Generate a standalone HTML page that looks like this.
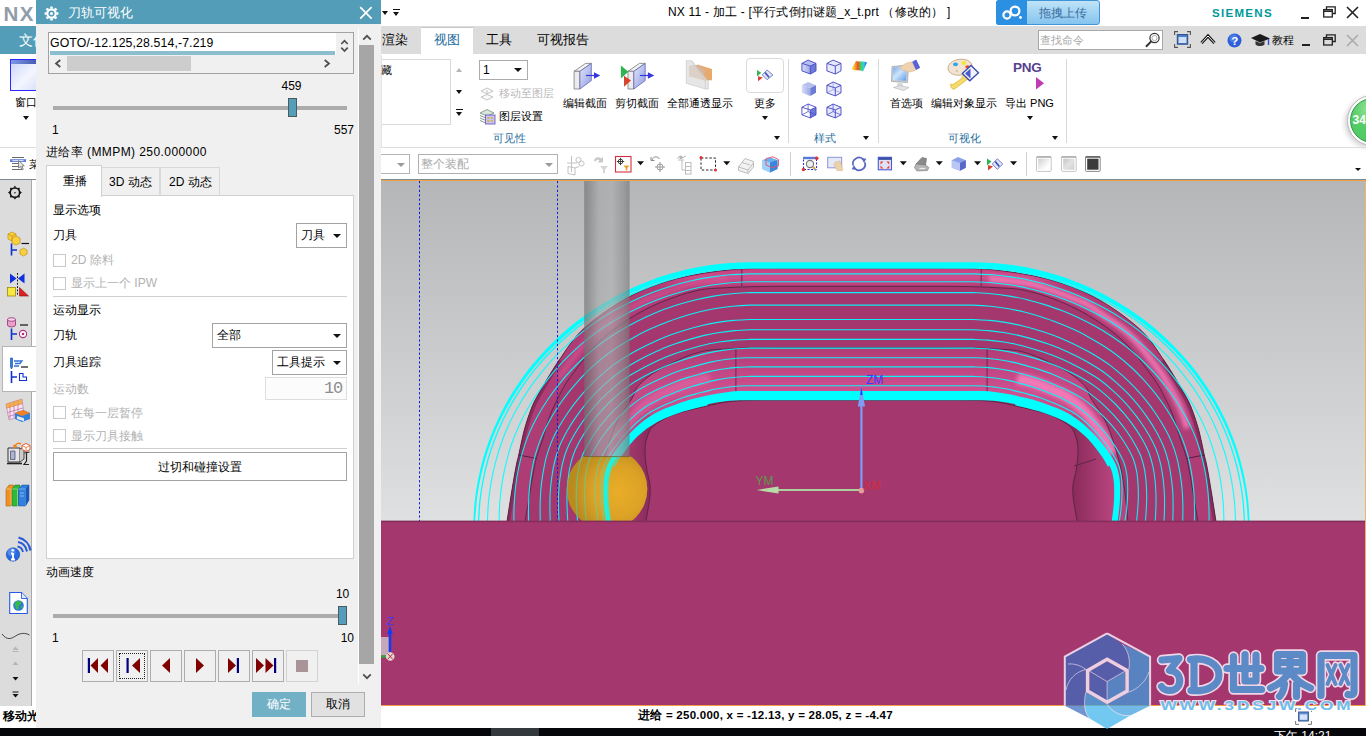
<!DOCTYPE html>
<html lang="zh"><head><meta charset="utf-8"><title>NX 11</title>
<style>
*{box-sizing:border-box;margin:0;padding:0}
html,body{width:1366px;height:736px;overflow:hidden;background:#fff}
body{position:relative;font-family:"Liberation Sans",sans-serif;font-size:12px;color:#000}
.a{position:absolute}
.t{position:absolute;white-space:nowrap;line-height:1}
svg{position:absolute;overflow:visible}
svg text{font-family:"Liberation Sans",sans-serif}
/* ---------- main window ---------- */
#tabrow{left:0;top:26px;width:1366px;height:28px;background:#dcdcdc}
#filetab{left:0;top:26px;width:60px;height:28px;background:#539db8}
#acttab{left:421px;top:27px;width:52px;height:28px;background:#fff;border-top:1px solid #c8c8c8}
#ribline{left:0;top:147px;width:1366px;height:1px;background:#dcdcdc}
#tbline{left:0;top:179px;width:1366px;height:1px;background:#7b8a93}
#orange{left:381px;top:180px;width:985px;height:1px;background:#f2a045}
#side{left:0;top:180px;width:32px;height:526px;background:#dcdcdc;border-right:1px solid #a9a9a9}
#side2{left:32px;top:180px;width:5px;height:526px;background:#fff}
#status{left:0;top:706px;width:1366px;height:22px;background:#fff}
#orange2{left:381px;top:705px;width:985px;height:1px;background:#f2a045}
#task{left:0;top:728px;width:1366px;height:8px;background:#04060a}
.rl{font-size:11px;color:#000}
.grp{font-size:11px;color:#1c6c9c}
.vsep{position:absolute;width:1px;background:#d8d8d8}
.tri{position:absolute;width:0;height:0;border-left:3.5px solid transparent;border-right:3.5px solid transparent;border-top:4px solid #111}
/* ---------- dialog ---------- */
#dlg{left:36px;top:0;width:345px;height:728px;background:#f0f0f0}
#dlgtitle{left:0;top:0;width:345px;height:24px;background:#539db8}
.lbl{font-size:12px;color:#000}
.dis{color:#b2b2b2}
.cb{position:absolute;width:13px;height:13px;border:1px solid #c9c9c9;background:#fff}
.dd{position:absolute;border:1px solid #a3a3a3;background:#fff}
.hsep{position:absolute;height:1px;background:#cfcfcf}
.pbtn{position:absolute;top:650px;width:32px;height:32px;border:1px solid #adadad;background:#f0f0f0}
</style></head><body>

<!-- ======= title bar ======= -->
<div class="t" style="left:3.4px;top:3.8px;font-size:20.5px;font-weight:bold;color:#8f9cab;letter-spacing:1.6px">NX</div>
<div class="tri" style="left:382px;top:11px"></div>
<div class="a" style="left:392.5px;top:8.5px;width:7px;height:1px;background:#111"></div><div class="tri" style="left:392.5px;top:11.5px"></div>
<div class="t" style="left:668px;top:6px;font-size:12px;letter-spacing:.2px">NX 11 - 加工 - [平行式倒扣谜题_x_t.prt （修改的） ]</div>
<div class="a" style="left:996px;top:0;width:104px;height:25px;border-radius:3px;background:linear-gradient(#bfe3f8,#86c4ee);border:1px solid #3f95d6"></div>
<div class="a" style="left:996px;top:0;width:31px;height:25px;border-radius:3px 0 0 3px;background:#2b8fe2"></div>
<svg style="left:1001px;top:4px" width="22" height="17" viewBox="0 0 22 17"><circle cx="6" cy="11" r="3.6" fill="none" stroke="#fff" stroke-width="2.2"/><circle cx="14" cy="7" r="4.4" fill="none" stroke="#fff" stroke-width="2.2"/><circle cx="19.5" cy="13.5" r="1.4" fill="#fff"/><path d="M8.5,8.5L11,9.5" stroke="#fff" stroke-width="2.2"/></svg>
<div class="t" style="left:1039px;top:6.5px;font-size:12px;color:#3c6c9e">拖拽上传</div>
<div class="t" style="left:1212px;top:8px;font-size:11.5px;font-weight:bold;color:#099;letter-spacing:1.3px">SIEMENS</div>
<div class="a" style="left:1301px;top:17px;width:8px;height:2px;background:#222"></div>
<svg style="left:1323px;top:6px" width="13" height="12" viewBox="0 0 13 12"><path d="M3.5,3.5V.8H12.2V7.5H9.5" fill="none" stroke="#222" stroke-width="1.3"/><rect x=".7" y="3.6" width="8.6" height="7.4" fill="#fff" stroke="#222" stroke-width="1.3"/><path d="M.7,5.2H9.3" stroke="#222" stroke-width="1.6"/></svg>
<svg style="left:1346px;top:6px" width="13" height="13" viewBox="0 0 13 13"><path d="M1,1L12,12M12,1L1,12" stroke="#222" stroke-width="1.6"/></svg>

<!-- ======= tab row ======= -->
<div id="tabrow" class="a"></div>
<div id="filetab" class="a"></div>
<div class="t" style="left:19px;top:33px;font-size:14px;color:#fff">文件</div>
<div id="acttab" class="a"></div>
<div class="t" style="left:382px;top:33px;font-size:13px">渲染</div>
<div class="t" style="left:434px;top:33px;font-size:13px;color:#1c6c9c">视图</div>
<div class="t" style="left:486px;top:33px;font-size:13px">工具</div>
<div class="t" style="left:537px;top:33px;font-size:13px">可视报告</div>
<div class="a" style="left:1038px;top:30px;width:125px;height:20px;background:#fff;border:1px solid #a8a8a8"></div>
<div class="t" style="left:1040px;top:34.5px;font-size:11px;color:#a9a9a9">查找命令</div>
<svg style="left:1144px;top:31px" width="18" height="18" viewBox="0 0 18 18"><circle cx="10.5" cy="7" r="4.6" fill="#fff" stroke="#333" stroke-width="1.2"/><circle cx="10.5" cy="7" r="2.6" fill="none" stroke="#999" stroke-width=".8"/><path d="M7.2,10.4L2,15.8" stroke="#333" stroke-width="2"/></svg>
<svg style="left:1174px;top:31px" width="17" height="17" viewBox="0 0 17 17"><path d="M.6,4V.6H4M13,.6h3.4V4M16.4,13v3.4H13M4,16.4H.6V13" fill="none" stroke="#555" stroke-width="1.1"/><rect x="3.3" y="3.6" width="10.4" height="9.6" fill="#4a7fd0" stroke="#2a4a80" stroke-width="1"/><rect x="4.6" y="6" width="7.8" height="6" fill="#cfe0f6"/></svg>
<svg style="left:1200px;top:33px" width="16" height="12" viewBox="0 0 16 12"><path d="M1.5,10L8,3L14.5,10" fill="none" stroke="#111" stroke-width="3"/><path d="M1.5,10L8,3L14.5,10" fill="none" stroke="#fff" stroke-width="1"/></svg>
<svg style="left:1227px;top:33px" width="15" height="15" viewBox="0 0 15 15"><circle cx="7.5" cy="7.5" r="7" fill="#2f5fd8"/><circle cx="6.5" cy="5.5" r="4" fill="#5f8df0" opacity=".6"/><text x="4.2" y="12" font-size="11.5" font-weight="bold" fill="#fff">?</text></svg>
<svg style="left:1251px;top:34px" width="20" height="13" viewBox="0 0 20 13"><path d="M0,4L9,0L19,4.5L9,8.5Z" fill="#1a1a1a"/><path d="M4.5,7V10.5C7,12.5 11,12.5 13.5,10.5V7L9,9Z" fill="#333"/><path d="M17.5,5V11" stroke="#2a4fd0" stroke-width="1.4"/></svg>
<div class="t" style="left:1272px;top:34.5px;font-size:11px">教程</div>
<div class="a" style="left:1302px;top:44px;width:8px;height:2px;background:#222"></div>
<svg style="left:1323px;top:34px" width="13" height="12" viewBox="0 0 13 12"><path d="M3.5,3.5V.8H12.2V7.5H9.5" fill="none" stroke="#222" stroke-width="1.3"/><rect x=".7" y="3.6" width="8.6" height="7.4" fill="#dcdcdc" stroke="#222" stroke-width="1.3"/><path d="M.7,5.2H9.3" stroke="#222" stroke-width="1.6"/></svg>
<svg style="left:1346px;top:34px" width="13" height="13" viewBox="0 0 13 13"><path d="M1,1L12,12M12,1L1,12" stroke="#a9a9a9" stroke-width="1.5"/></svg>

<!-- ======= ribbon ======= -->
<!-- left (window) -->
<div class="a" style="left:10px;top:59px;width:32px;height:32px;border:1px solid #2a2aff;background:linear-gradient(135deg,#c9d3f8 0%,#f4f6ff 55%,#d5dcf8 100%)"></div>
<div class="a" style="left:11px;top:60px;width:30px;height:4px;background:linear-gradient(90deg,#7f97e6,#3a4fa8)"></div>
<div class="t rl" style="left:15px;top:97px">窗口</div><div class="tri" style="left:22.5px;top:115.5px"></div>
<div class="a" style="left:0;top:147px;width:36px;height:1px;background:#dcdcdc"></div>
<svg style="left:9px;top:156px" width="18" height="16" viewBox="0 0 18 16"><rect x="1" y="3.2" width="16" height="2.8" fill="#5f7fe0"/><path d="M3,1.5H15M3,7.5H10M3,10.5H10M3,13.5H13" stroke="#6a6a6a" stroke-width="1"/><path d="M3.5,4.6H14.5" stroke="#dfe6fb" stroke-width="1"/><path d="M9.5,4.5V12L11.5,10.5L13,13.8L14.3,13.2L12.8,10L15.3,9.8Z" fill="#e8e8e8" stroke="#6a6a6a" stroke-width=".8"/></svg>
<div class="t" style="left:29px;top:159px;font-size:11px">菜</div>

<!-- gallery -->
<div class="a" style="left:380px;top:59px;width:71px;height:66px;border:1px solid #d9d9d9;background:#fff"></div>
<div class="a" style="left:381px;top:55px;width:1px;height:92px;background:#e4e4e4"></div>
<div class="t rl" style="left:381px;top:65px">藏</div>
<div class="tri" style="left:456px;top:68px;border-top:none;border-bottom:4px solid #b5b5b5"></div>
<div class="tri" style="left:456px;top:90px"></div>
<div class="a" style="left:456px;top:109px;width:7px;height:1px;background:#111"></div><div class="tri" style="left:456px;top:112px"></div>
<!-- layer controls -->
<div class="dd" style="left:479px;top:60px;width:49px;height:20px;border-color:#ababab"></div>
<div class="t" style="left:483px;top:64px;font-size:12px">1</div><div class="tri" style="left:514px;top:68px;border-left-width:4px;border-right-width:4px;border-top-width:4.5px"></div>
<svg style="left:479px;top:86px" width="16" height="16" viewBox="0 0 16 16"><path d="M2,5L8,2L14,5L8,8ZM2,11L8,8.5L14,11L8,14Z" fill="#fafafa" stroke="#c4c4c4" stroke-width="1"/><path d="M8,8V4" stroke="#c4c4c4"/></svg>
<div class="t rl" style="left:499px;top:88px;color:#b9b9b9">移动至图层</div>
<svg style="left:479px;top:108px" width="17" height="17" viewBox="0 0 17 17"><path d="M1,5L8,1.5L15,5L8,8Z" fill="#d7e6d8" stroke="#7a8a80" stroke-width=".8"/><path d="M1,7.5L8,10.5M1,10L8,13M1,12.5L8,15.5" stroke="#7a8a80" stroke-width=".9" fill="none"/><rect x="6.5" y="7" width="9.5" height="9" fill="#c9c4f0" stroke="#6a60c0" stroke-width=".9"/><path d="M8.5,10h2M12,10h2M8.5,13h2M12,13h2" stroke="#d8b020" stroke-width="1.4"/></svg>
<div class="t rl" style="left:499px;top:111px">图层设置</div>
<div class="t grp" style="left:492.5px;top:132.5px">可见性</div>

<!-- edit section -->
<svg style="left:572px;top:60px" width="32" height="32" viewBox="572 60 32 32"><defs><linearGradient id="slab" x1="0" y1="0" x2="1" y2="1"><stop offset="0" stop-color="#e4e8fa"/><stop offset="1" stop-color="#8f9ce2"/></linearGradient></defs>
<g id="slabg"><path d="M574.1,71.3L585.6,63.4H591.3L579.9,71.3Z" fill="#f4f4f4" stroke="#7a7a7a" stroke-width=".8"/><path d="M574.1,71.3H579.9V89H574.1Z" fill="#ececec" stroke="#7a7a7a" stroke-width=".8"/><path d="M579.9,71.3L591.3,63.4V80.6L579.9,89Z" fill="url(#slab)" stroke="#6464b4" stroke-width=".8"/><path d="M586,75.5H594.5" stroke="#3636e0" stroke-width="1.2"/><path d="M594,72.2L600.3,75.5L594,78.8Z" fill="#3636e0"/></g></svg>
<div class="t rl" style="left:563px;top:97.5px">编辑截面</div>
<!-- clip section -->
<svg style="left:618px;top:60px" width="40" height="32" viewBox="618 60 40 32"><use href="#slabg" x="53.9"/><path d="M620.9,65.6L628.4,71.8L620.9,78.4Z" fill="#2fb452"/><path d="M624,75.7L631,80.6L624,86.8Z" fill="#d7432c"/></svg>
<div class="t rl" style="left:615px;top:97.5px">剪切截面</div>
<!-- see-thru all -->
<svg style="left:684px;top:58px" width="32" height="34" viewBox="684 58 32 34"><path d="M689,66L698.3,64.7L712,69.1V80.2L704.9,80.6L689,76.2Z" fill="#e6aa6c"/><path d="M689,66L698.3,64.7L704.9,69.5V80.6L689,76.2Z" fill="#d9b394"/><path d="M686.3,60.7H691.6L708.4,81.5V89H705.3L686.3,83.3Z" fill="#dcdcdc" fill-opacity=".72" stroke="#c4c4c4" stroke-width=".6"/><path d="M691.6,60.7L705.3,81.5V89" fill="none" stroke="#c8c8c8" stroke-width=".7"/></svg>
<div class="t rl" style="left:667px;top:97.5px">全部通透显示</div>
<!-- more -->
<div class="a" style="left:746px;top:58px;width:38px;height:35px;border:1px solid #dadada;border-radius:4px;background:#fff"></div>
<svg style="left:755px;top:68px" width="20" height="14" viewBox="755 68 20 14"><path d="M757,70L761.2,72.8L757,76.6Z" fill="#2fb452"/><path d="M758,76.2L762.8,77.6L758,81.2Z" fill="#d7432c"/><path d="M762.3,74.9L767.1,70L772.9,74.9L767.1,79.7Z" fill="#dfe5f8" stroke="#6a78c0" stroke-width=".9"/><path d="M765,72.5L769,77.3" stroke="#3a4ab0" stroke-width="1.5"/></svg>
<div class="t rl" style="left:754px;top:97.5px">更多</div><div class="tri" style="left:762px;top:116px"></div>
<div class="tri" style="left:773.5px;top:135.5px"></div>
<div class="vsep" style="left:788px;top:59px;height:84px"></div>

<!-- style cubes -->
<svg style="left:800px;top:58px" width="70" height="62" viewBox="800 58 70 62"><defs><linearGradient id="cf" x1="0" y1="0" x2="1" y2="0"><stop offset="0" stop-color="#d5dcf7"/><stop offset="1" stop-color="#9aa8e6"/></linearGradient>
<g id="cubeS"><path d="M0,3.3L6.2,0L14.1,3.3L8.4,5.9Z" fill="#b4bfee"/><path d="M0,3.3L8.4,5.9V13.9L0,10.8Z" fill="url(#cf)"/><path d="M8.4,5.9L14.1,3.3V10.8L8.4,13.9Z" fill="#6b7cd2"/></g>
<g id="cubeW" fill="none" stroke="#4444c8" stroke-width=".9"><path d="M0,3.3L6.2,0L14.1,3.3V10.8L8.4,13.9L0,10.8ZM0,3.3L8.4,5.9L14.1,3.3M8.4,5.9V13.9"/></g>
<g id="cubeH" fill="none" stroke="#4444c8" stroke-width=".7"><path d="M6.2,0V7.6L0,10.8M6.2,7.6L14.1,10.8"/></g></defs>
<use href="#cubeS" x="801.9" y="60.1"/><use href="#cubeW" x="801.9" y="60.1"/>
<g transform="translate(826.9,60.1)"><path d="M0,3.3L6.2,0L14.1,3.3V10.8L8.4,13.9L0,10.8Z" fill="#e6eafa"/></g><use href="#cubeW" x="826.9" y="60.1"/>
<use href="#cubeS" x="801.9" y="82"/>
<g transform="translate(826.9,82)"><path d="M0,3.3L6.2,0L14.1,3.3V10.8L8.4,13.9L0,10.8Z" fill="#e6eafa"/></g><use href="#cubeW" x="826.9" y="82"/><g opacity=".5"><use href="#cubeH" x="826.9" y="82"/></g>
<g transform="translate(801.9,104)"><path d="M8.4,5.9L14.1,3.3V10.8L8.4,13.9Z" fill="#6b7cd2"/></g><use href="#cubeW" x="801.9" y="104"/><use href="#cubeH" x="801.9" y="104"/>
<g transform="translate(826.9,104)"><path d="M0,3.3L6.2,0L14.1,3.3V10.8L8.4,13.9L0,10.8Z" fill="#e6eafa"/></g><use href="#cubeW" x="826.9" y="104"/><use href="#cubeH" x="826.9" y="104"/>
<defs><linearGradient id="rb" x1="852" y1="0" x2="867" y2="0" gradientUnits="userSpaceOnUse"><stop offset="0" stop-color="#f6ea3a"/><stop offset=".22" stop-color="#f6a02a"/><stop offset=".4" stop-color="#ee4a2a"/><stop offset=".58" stop-color="#4ad04a"/><stop offset=".78" stop-color="#2ad0e8"/><stop offset="1" stop-color="#3a50e8"/></linearGradient></defs>
<path d="M851.6,69L856,60.8C859,62.6 862.5,60.4 867,62.6L863,71.6C859,69 856,71.6 851.6,69Z" fill="url(#rb)"/></svg>
<div class="t grp" style="left:813.5px;top:132.5px">样式</div><div class="tri" style="left:863px;top:135.5px"></div>
<div class="vsep" style="left:877.5px;top:59px;height:84px"></div>

<!-- preferences -->
<svg style="left:888px;top:58px" width="36" height="34" viewBox="888 58 36 34"><defs><linearGradient id="scr" x1="0" y1="0" x2="1" y2="1"><stop offset="0" stop-color="#6aa8ee"/><stop offset=".45" stop-color="#cfe4fa"/><stop offset="1" stop-color="#5a9ae6"/></linearGradient></defs>
<path d="M892,66.5L908.5,65L907.5,82.5L891.5,81.5Z" fill="#c8ccd0" stroke="#9aa0a6" stroke-width=".7"/><path d="M893.2,67.8L906.8,66.6L906,80.8L892.8,80Z" fill="url(#scr)"/><path d="M897.5,82H902.5L903,87H897Z" fill="#d8dadc"/><path d="M893.5,87.5L899,85.5L909,87.5L903.5,90.5Z" fill="#e2e4e6" stroke="#aeb2b6" stroke-width=".6"/>
<path d="M900,68.5C902,65 906,62.5 912,62L916,70C911,72.5 907,72.5 905.5,70.5C903.5,70.5 901,70 900,68.5Z" fill="#efd2b0" stroke="#d4b088" stroke-width=".5"/><path d="M912.2,61.8L916.2,59.5L920.2,67.8L916,70Z" fill="#5a62d8"/></svg>
<div class="t rl" style="left:890px;top:97.5px">首选项</div>
<!-- edit object display -->
<svg style="left:944px;top:57px" width="38" height="36" viewBox="944 57 38 36"><ellipse cx="960" cy="67.2" rx="12.2" ry="8" fill="#f2e4d4" stroke="#c8a078" stroke-width=".8" transform="rotate(-8 960 67)"/><ellipse cx="955.5" cy="64.3" rx="2.5" ry="1.9" fill="#2ea4ea"/><ellipse cx="963.8" cy="63" rx="2.2" ry="2" fill="#f4e82a"/><ellipse cx="967.5" cy="66.8" rx="2.2" ry="1.6" fill="#e84a2a"/><circle cx="956.8" cy="71" r="1.2" fill="#d8c4a8"/>
<path d="M950.5,86.5L953,89.5L956,88L968.5,78.5C971,79 973,77 972,74L968.5,72.5L965,74.5C962,75 962.5,78 961,79L953,84.5L950.8,84Z" fill="#f5dc6a" stroke="#d8b030" stroke-width=".7"/>
<path d="M962.3,73.5L971,65.5L978.5,72.8L969.8,80.8Z" fill="#f2f4fc" stroke="#3a4aa8" stroke-width="1.3"/><path d="M965,73.5L970.5,68.5V78.5Z" fill="#4a5ad0"/></svg>
<div class="t rl" style="left:931px;top:97.5px">编辑对象显示</div>
<!-- export png -->
<div class="t" style="left:1013px;top:60.5px;font-size:13.5px;font-weight:bold;color:#573f8f;letter-spacing:-.3px">PNG</div>
<svg style="left:1035px;top:76px" width="10" height="14" viewBox="0 0 10 14"><path d="M1,1L9,7.2L1,13.4Z" fill="#c13cb4"/></svg>
<div class="t rl" style="left:1005px;top:97.5px">导出 PNG</div><div class="tri" style="left:1026.5px;top:116px"></div>
<div class="t grp" style="left:947.5px;top:132.5px">可视化</div><div class="tri" style="left:1051.5px;top:135.5px"></div>
<div class="vsep" style="left:1066px;top:59px;height:84px"></div>
<!-- green badge -->
<div class="a" style="left:1346.5px;top:94.5px;width:51px;height:51px;border-radius:50%;background:#fff;border:1.5px solid #b9b9b9;box-shadow:-2px 2px 5px rgba(0,0,0,.18)"></div>
<div class="a" style="left:1349.5px;top:97.5px;width:45px;height:45px;border-radius:50%;background:radial-gradient(circle at 45% 25%,#9be6a0 0%,#55cc66 45%,#4cc862 100%);border:1px solid #2f9a48"></div>
<div class="t" style="left:1352.5px;top:114px;font-size:12px;font-weight:bold;color:#fff">34</div>


<div id="ribline" class="a"></div>
<!-- ======= toolbar ======= -->
<div class="a" style="left:380px;top:154px;width:30px;height:20px;border:1px solid #b5b5b5;background:#fff"></div>
<div class="tri" style="left:396.5px;top:162.5px;border-left-width:4px;border-right-width:4px;border-top:4.5px solid #9a9a9a"></div>
<div class="a" style="left:418px;top:154px;width:140px;height:20px;border:1px solid #b0b0b0;background:#fff"></div>
<div class="t" style="left:421px;top:158px;font-size:12px;color:#a9a9a9">整个装配</div>
<div class="tri" style="left:544.5px;top:162.5px;border-left-width:4px;border-right-width:4px;border-top:4.5px solid #9a9a9a"></div>
<svg style="left:560px;top:150px" width="230" height="28" viewBox="560 150 230 28">
<g fill="none" stroke="#c2c2c2" stroke-width="1"><path d="M571.5,156V172M567,163H577M568,166.5L575,168V175L568,173.5ZM575,168L579,166.5"/><circle cx="578.5" cy="160" r="2.6"/><circle cx="581.5" cy="163.5" r="2.6"/></g>
<g fill="#c9c9c9"><path d="M594,161C594,157 599,156 601,158.5L603,157V162.5H597.5L599.5,160.5C598.5,159.3 596,159.5 596,161.5Z"/><path d="M600,166H608L605,169.5V174L603,172.5V169.5Z" fill="#d6d6d6"/></g>
<rect x="615.5" y="156.5" width="15.5" height="15.5" fill="#fff" stroke="#d23040" stroke-width="1.1"/><circle cx="620.5" cy="161.5" r="2.3" fill="none" stroke="#333" stroke-width=".9"/><path d="M620.5,157.8V165.2M616.8,161.5H624.2" stroke="#333" stroke-width=".9"/><path d="M623.5,165.5H629.5L627.3,168V171L625.7,170V168Z" fill="#f0a020"/>
<path d="M637,161.2H644L640.5,165.2Z" fill="#111"/>
<g fill="none" stroke="#9a9a9a" stroke-width="1"><circle cx="660" cy="167" r="3"/><path d="M660,162V172M655,167H665"/><path d="M652,160C653,156 658,156 659.5,159" stroke="#8a8a8a"/><path d="M651,157V160.5H654.5" stroke="#8a8a8a"/></g>
<g fill="none" stroke="#bdbdbd" stroke-width="1"><path d="M677,158.5L680,156L683,157.5L686,156M678,160H684"/><rect x="685.5" y="162.5" width="5.5" height="11.5"/><path d="M685.5,166.5H691M685.5,170.5H691M682,160V170H685.5"/></g><circle cx="681" cy="157.5" r="1.7" fill="#b5b5b5"/>
<rect x="701" y="158" width="14.5" height="12" fill="none" stroke="#222" stroke-width="1" stroke-dasharray="2.4,1.8"/><circle cx="701" cy="157.5" r="1.5" fill="#e03030"/><circle cx="715.5" cy="170" r="1.5" fill="#e03030"/>
<path d="M723.2,161.2H730.2L726.7,165.2Z" fill="#111"/>
<g fill="#f2f2f2" stroke="#bdbdbd" stroke-width="1"><path d="M738.5,167L745,158.5L753.5,161.5L753.5,167L748,173.5L738.5,170.5Z"/><path d="M738.5,167L748,170L753.5,163M748,170V173.5M742,162.5L750,165" fill="none"/></g>
<path d="M762.5,160L770.5,157.5L777.5,160V169L770,172.5L762.5,169Z" fill="#6ab0ee"/><path d="M762.5,160L770,162.5V172.5L762.5,169Z" fill="#9fd0f8"/><path d="M770,162.5L777.5,160V169L770,172.5Z" fill="#3c86da"/><path d="M766,158.5L773,156.8L778.5,159.5V166L772,167.5L766,165Z" fill="none" stroke="#e05070" stroke-width=".9"/>
</svg>
<div class="vsep" style="left:790px;top:152px;height:24px;background:#d0d0d0"></div>
<svg style="left:798px;top:150px" width="310" height="28" viewBox="798 150 310 28">
<rect x="803.5" y="158" width="13" height="11.5" fill="#fff" stroke="#2a2ae8" stroke-width="1.1" stroke-dasharray="2,1.5"/><rect x="803" y="156.8" width="14" height="2.4" fill="#5a7ad8"/><circle cx="810" cy="164" r="3.6" fill="#eee" stroke="#777" stroke-width="1.1"/><path d="M812.8,167L816,170.3" stroke="#8090b0" stroke-width="1.8"/><circle cx="816.8" cy="158.2" r="1.7" fill="#e03030"/><circle cx="803.5" cy="169.5" r="1.7" fill="#e03030"/><circle cx="814" cy="167.8" r="1.2" fill="#f0b030"/>
<rect x="827.7" y="157.3" width="14" height="10.5" fill="#e6e9f8" stroke="#8a96d8" stroke-width="1"/><path d="M834,165C834,162.5 836,161 837.5,162L839,160.8L840.5,162L841.5,164.5L842.5,170.5H837Z" fill="#ecd2aa" stroke="#d0b080" stroke-width=".5"/>
<g fill="none" stroke="#5868c0" stroke-width="1.7"><path d="M853.2,165.5A6,6 0 0 1 863.5,159.8"/><path d="M864.8,162.2A6,6 0 0 1 854.5,168"/></g><path d="M861.5,158L866.3,158.8L864,163Z" fill="#5868c0"/><path d="M856.5,170L851.7,169.2L854,165Z" fill="#5868c0"/>
<rect x="878.3" y="157.3" width="13.2" height="12.5" fill="#dfe3f8" stroke="#4a5ad8" stroke-width="1.1"/><rect x="878.3" y="157.3" width="13.2" height="2.6" fill="#3a52a8"/><g fill="#f0402a"><path d="M880.5,161.5H883.5L880.5,164.5ZM889.3,161.5V164.5L886.3,161.5ZM880.5,168.5V165.5L883.5,168.5ZM889.3,168.5H886.3L889.3,165.5Z"/></g>
<path d="M899.8,161.2H906.8L903.3,165.2Z" fill="#111"/>
<path d="M916,164L922,157.5L926.5,158.5L925.5,165Z" fill="#8a8a8a" stroke="#666" stroke-width=".6"/><path d="M914.5,167.5L916,164L925.5,165L928.8,167.5L927.5,170.5L917,171Z" fill="#b5b5b5" stroke="#777" stroke-width=".6"/><path d="M919.5,168.5H925" stroke="#eee" stroke-width="1.2"/>
<path d="M935.8,161.2H942.8L939.3,165.2Z" fill="#111"/>
<path d="M951.8,160.3L958,157L965.8,160.3V167.8L960,170.8L951.8,167.8Z" fill="#8ea0e6"/><path d="M951.8,160.3L960,163V170.8L951.8,167.8Z" fill="#b9c6f4"/><path d="M960,163L965.8,160.3V167.8L960,170.8Z" fill="#5668c8"/>
<path d="M974,161.2H981L977.5,165.2Z" fill="#111"/>
<path d="M987,158.5L991.5,161.5L987,165.5Z" fill="#2fb452"/><path d="M988,165L993,166.5L988,170.5Z" fill="#d7432c"/><path d="M992.3,164L997.3,158.8L1002.8,164L997.3,169.3Z" fill="#dfe5f8" stroke="#6a78c0" stroke-width=".9"/><path d="M995.3,161.5L999.3,166.5" stroke="#3a4ab0" stroke-width="1.6"/>
<path d="M1010,161.2H1017L1013.5,165.2Z" fill="#111"/>
<defs><linearGradient id="sq1" x1="0" y1="0" x2="1" y2="1"><stop offset="0" stop-color="#cfcfcf"/><stop offset=".7" stop-color="#fbfbfb"/><stop offset="1" stop-color="#fff"/></linearGradient><linearGradient id="sq2" x1="0" y1="0" x2="1" y2="1"><stop offset="0" stop-color="#c4c4c4"/><stop offset=".5" stop-color="#e2e2e2"/><stop offset="1" stop-color="#d0d0d0"/></linearGradient></defs>
<rect x="1036.5" y="156.7" width="14.7" height="14.7" rx="1" fill="#fff" stroke="#c6c6c6" stroke-width="1"/><path d="M1036.5,157H1051.2" stroke="#a6a6a6" stroke-width="1.4"/><rect x="1038.2" y="158.7" width="11.3" height="11" fill="url(#sq1)"/>
<rect x="1061.5" y="156.7" width="14.7" height="14.7" rx="1" fill="#fff" stroke="#c6c6c6" stroke-width="1"/><path d="M1061.5,157H1076.2" stroke="#a6a6a6" stroke-width="1.4"/><rect x="1063.2" y="158.7" width="11.3" height="11" fill="url(#sq2)"/>
<rect x="1085.5" y="156.7" width="14.7" height="14.7" rx="1" fill="#fff" stroke="#8a8a8a" stroke-width="1"/><path d="M1085.5,157H1100.2" stroke="#555" stroke-width="1.4"/><rect x="1087.2" y="158.7" width="11.3" height="11" fill="#3c3c3c"/>
</svg>
<div class="vsep" style="left:1026px;top:152px;height:24px;background:#d0d0d0"></div>
<div class="tri" style="left:1355px;top:168px;border-left-width:3px;border-right-width:3px;border-top-width:3.5px"></div>

<div id="tbline" class="a"></div>
<div id="orange" class="a"></div>

<!-- ======= left sidebar ======= -->
<div id="side" class="a"></div><div id="side2" class="a"></div>
<div class="a" style="left:2px;top:346px;width:35px;height:46px;background:#fff;border:1px solid #b5b5b5;border-right:none"></div>
<svg style="left:0;top:181px" width="36" height="524" viewBox="0 181 36 524">
<!-- gear -->
<circle cx="14.9" cy="192.6" r="4.7" fill="none" stroke="#111" stroke-width="1.5"/><g fill="#111"><path id="gt" d="M13.3,187.6L14.9,185.7L16.5,187.6Z"/><use href="#gt" transform="rotate(45 14.9 192.6)"/><use href="#gt" transform="rotate(90 14.9 192.6)"/><use href="#gt" transform="rotate(135 14.9 192.6)"/><use href="#gt" transform="rotate(180 14.9 192.6)"/><use href="#gt" transform="rotate(225 14.9 192.6)"/><use href="#gt" transform="rotate(270 14.9 192.6)"/><use href="#gt" transform="rotate(315 14.9 192.6)"/></g><path d="M14,192.8H15.8" stroke="#222" stroke-width="1"/>
<!-- assembly nav -->
<g stroke="#c89010" stroke-width=".7"><path d="M8,234L12,232L16,234V239L12,241L8,239Z" fill="#f8d040"/><path d="M12,238L16,236L20,238V243L16,245L12,243Z" fill="#f8d040"/><path d="M8,234L12,236L16,234M12,236V241" fill="none"/><path d="M20,250L23.5,248.2L27,250V254L23.5,256L20,254Z" fill="#f8d040"/></g>
<path d="M11.5,243.5V255.5M11.5,250H17" stroke="#1030d0" stroke-width="1.6" fill="none"/><path d="M21.5,243.5H29" stroke="#111" stroke-width="1.2"/>
<!-- constraint nav -->
<path d="M10,273.5L16.5,278.5L10,283.5ZM24.5,273.5L18,278.5L24.5,283.5Z" fill="#1030e0"/><path d="M17.5,273V296" stroke="#111" stroke-width="1" stroke-dasharray="1.8,1.5"/><rect x="7.5" y="287.5" width="8" height="8.5" fill="#f8e840" stroke="#a08810" stroke-width=".8"/><path d="M19.5,287.5L28.5,296H19.5Z" fill="#e02020" stroke="#801010" stroke-width=".6"/>
<!-- part nav -->
<path d="M7.5,319.5V325C7.5,327.5 15.5,327.5 15.5,325V319.5Z" fill="#e8a0c8" stroke="#903070" stroke-width=".8"/><ellipse cx="11.5" cy="319.5" rx="4" ry="1.8" fill="#f8d0e8" stroke="#903070" stroke-width=".8"/>
<path d="M11.5,328.5V340M11.5,334H17" stroke="#1030d0" stroke-width="1.6" fill="none"/><path d="M20,325H28" stroke="#111" stroke-width="1.2"/><circle cx="23" cy="334" r="3.6" fill="#fff" stroke="#b03080" stroke-width="1.1"/><circle cx="23" cy="334" r="1.3" fill="#b03080"/>
<!-- active: operation nav -->
<path d="M10.5,358V367L11.5,369L12.5,367V358Z" fill="#3080e0" stroke="#1040b0" stroke-width=".6"/><path d="M14,361H22L20,363.5H15M14,366H19" stroke="#3070d8" stroke-width="1.3" fill="none"/><path d="M21,367H28" stroke="#111" stroke-width="1.2"/>
<path d="M11.5,371V383M11.5,377H17" stroke="#1030d0" stroke-width="1.6" fill="none"/><path d="M19.5,373.5V380.5H26.5V377H23V373.5Z" fill="#fff" stroke="#1030d0" stroke-width="1.1"/>
<!-- machine tool / grid icon -->
<path d="M6,404L22,399L24,415L9,420Z" fill="#f4e8f0" stroke="#b070a0" stroke-width=".6"/><path d="M10,403V419M14,401.5V418M18,400.5V416.5M6.5,408L22.5,403.5M7.5,412.5L23,408M8.5,416.5L23.5,412" stroke="#c060a0" stroke-width=".7"/><path d="M6,404L22,399L22.5,403.5L6.5,408.5Z" fill="#f0a030" opacity=".8"/>
<path d="M15,413L23,410L30,413V419L22,422L15,419Z" fill="#3080e0"/><path d="M15,413L23,410L30,413L22,416Z" fill="#f08020"/><rect x="17" y="416" width="7" height="3" fill="#e8e8e8" transform="skewY(18) translate(0,-5.5)"/>
<!-- machine icon -->
<path d="M8,448H20V462H8Z" fill="#e6e6ea" stroke="#333" stroke-width="1"/><path d="M10.5,451H15V459.5H10.5Z" fill="#a8b4d8" stroke="#445" stroke-width=".7"/><path d="M20,449L24,447V459L20,462" fill="#ccc" stroke="#333" stroke-width=".9"/><path d="M7,463.5H22" stroke="#222" stroke-width="1.6"/><path d="M24.5,453L29.5,452M26.5,452.5V461L24,464.5H29" stroke="#222" stroke-width="1.2" fill="none"/>
<path d="M22,445.5L26,443.5L30,445.5V449.5L26,451.5L22,449.5Z" fill="#fff" stroke="#e05020" stroke-width=".9"/><path d="M22,445.5L26,447.5L30,445.5M26,447.5V451.5" stroke="#e05020" stroke-width=".7" fill="none"/><path d="M14.5,447C15.5,443.5 18.5,442.5 21,444" stroke="#f08020" stroke-width="1.5" fill="none"/><path d="M13,444.5L14.2,448.8L17.5,446Z" fill="#f08020"/>
<!-- books -->
<path d="M6,489L9,485H13.5V501L11,506H6Z" fill="#f09020" stroke="#a05810" stroke-width=".5"/><path d="M12,489L15,485H20V501L17.5,506H12Z" fill="#30b838" stroke="#187020" stroke-width=".5"/><path d="M18.5,489L22,485H29V500L25.5,506H18.5Z" fill="#3080e0" stroke="#1848a0" stroke-width=".5"/><path d="M6,489H11V506M12,489H17.5V506M18.5,489H25.5V506" fill="none" stroke="#fff" stroke-opacity=".55" stroke-width=".7"/><path d="M25.5,489L29,485V500L25.5,506Z" fill="#1858b8"/><path d="M20,493H24M20,496H24" stroke="#a0c8f8" stroke-width=".8"/>
<!-- info -->
<circle cx="13" cy="554.5" r="6.7" fill="#2a6ae0" stroke="#1848a8" stroke-width=".6"/><circle cx="11.5" cy="552" r="4" fill="#6aa0f4" opacity=".6"/><path d="M13,553V559.5M11,553.5H13M11,559.5H15" stroke="#fff" stroke-width="1.9" fill="none"/><circle cx="12.8" cy="550.2" r="1.3" fill="#fff"/>
<g fill="none" stroke="#2a5ad8"><path d="M17.5,546.5A7,7 0 0 1 23,552" stroke-width="1.8"/><path d="M18,542A11.5,11.5 0 0 1 27,551.5" stroke-width="2"/><path d="M18.5,537.5A16,16 0 0 1 30.5,550.5" stroke-width="2.2"/></g>
<!-- page/globe -->
<path d="M9.7,592.5H21.5L27.3,598.5V613.5H9.7Z" fill="#fff" stroke="#2a5ae0" stroke-width="1.1"/><path d="M21.5,592.5V598.5H27.3" fill="#dfe8fb" stroke="#2a5ae0" stroke-width=".9"/><circle cx="18.5" cy="605.5" r="5.3" fill="#2a78e0"/><path d="M15,603C16,600.5 19,600.2 21,601.5C22,603.5 20.5,604.5 19,605.5C18,607.5 19.5,609 17.5,610C15.5,608.5 14.5,606 15,603Z" fill="#38b848"/><path d="M21,606.5C22.5,606 23.2,607 22.5,608.5C21.5,609.5 20.5,608 21,606.5Z" fill="#38b848"/>
<!-- wave + arrows -->
<path d="M2,634C7,640.5 11,639 15.5,636C20,633 25,632.5 29.5,635" fill="none" stroke="#444" stroke-width="1"/>
<path d="M12.5,650H18.5L15.5,646.5Z" fill="#b5b5b5"/><path d="M12.5,651.5H18.5" stroke="#b5b5b5" stroke-width="1"/>
<path d="M12.5,665H18.5L15.5,661.5Z" fill="#b5b5b5"/>
<path d="M12.5,677H18.5L15.5,680.5Z" fill="#111"/>
<path d="M12.5,694H18.5L15.5,697.5Z" fill="#111"/><path d="M12.5,692H18.5" stroke="#111" stroke-width="1"/>
</svg>


<!-- ======= viewport ======= -->
<svg style="left:0;top:0" width="1366" height="736" viewBox="0 0 1366 736">
<defs>
<linearGradient id="bg" x1="0" y1="181" x2="0" y2="705" gradientUnits="userSpaceOnUse"><stop offset="0" stop-color="#b4b6b8"/><stop offset="1" stop-color="#f6f7f7"/></linearGradient>
<linearGradient id="cyl" x1="584" y1="0" x2="630" y2="0" gradientUnits="userSpaceOnUse"><stop offset="0" stop-color="#6f7070"/><stop offset="0.1" stop-color="#7e7f7f"/><stop offset="0.32" stop-color="#a6a8a8"/><stop offset="0.6" stop-color="#adaeae"/><stop offset="0.85" stop-color="#8f9090"/><stop offset="1" stop-color="#747575"/></linearGradient>
<radialGradient id="ball" cx="618" cy="492" r="46" gradientUnits="userSpaceOnUse"><stop offset="0" stop-color="#e9ad28"/><stop offset="0.55" stop-color="#dca226"/><stop offset="1" stop-color="#b98a1e"/></radialGradient>
<linearGradient id="band1" x1="0" y1="268" x2="0" y2="287" gradientUnits="userSpaceOnUse"><stop offset="0" stop-color="#c5407e"/><stop offset="0.5" stop-color="#cf4d8d"/><stop offset="1" stop-color="#b63a75"/></linearGradient>
<linearGradient id="band3" x1="0" y1="347" x2="0" y2="392" gradientUnits="userSpaceOnUse"><stop offset="0" stop-color="#b03b75"/><stop offset="1" stop-color="#d0508f"/></linearGradient>
<linearGradient id="wallL" x1="606" y1="0" x2="648" y2="0" gradientUnits="userSpaceOnUse"><stop offset="0" stop-color="#bd4782"/><stop offset="1" stop-color="#8c2c5c"/></linearGradient>
<linearGradient id="wallR" x1="1075" y1="0" x2="1117" y2="0" gradientUnits="userSpaceOnUse"><stop offset="0" stop-color="#8c2c5c"/><stop offset="1" stop-color="#bd4782"/></linearGradient>
<filter id="bl" x="-20%" y="-20%" width="140%" height="140%"><feGaussianBlur stdDeviation="2.2"/></filter>
<clipPath id="vp"><rect x="381" y="181" width="985" height="524"/></clipPath>
<clipPath id="ballc"><rect x="560" y="456.5" width="95" height="65"/></clipPath>
<linearGradient id="fadeH" x1="590" y1="0" x2="1133" y2="0" gradientUnits="userSpaceOnUse"><stop offset="0" stop-color="#000"/><stop offset="0.2" stop-color="#fff"/><stop offset="0.8" stop-color="#fff"/><stop offset="1" stop-color="#000"/></linearGradient>
<mask id="topm" maskUnits="userSpaceOnUse" x="590" y="255" width="543" height="160"><rect x="590" y="255" width="543" height="160" fill="url(#fadeH)"/></mask>
</defs>
<g clip-path="url(#vp)">
<rect x="381" y="181" width="985" height="524" fill="url(#bg)"/>
<path d="M507.0,521.5C507.7,516.9 509.8,503.3 511.3,494.0C512.8,484.7 514.9,472.3 516.2,465.7C517.5,459.1 517.6,460.1 518.9,454.2C520.2,448.3 522.2,437.8 524.2,430.3C526.2,422.8 528.9,414.9 531.2,409.0C533.5,403.1 533.4,403.1 538.0,395.0C542.6,386.9 551.0,371.9 558.8,360.7C566.5,349.5 572.6,338.7 584.5,328.0C596.4,317.3 614.5,304.6 630.0,296.4C645.5,288.2 660.7,283.0 677.4,278.6C694.1,274.2 713.7,271.5 730.0,269.8C746.3,268.1 767.5,268.6 775.0,268.4L948.0,268.4C955.5,268.6 976.7,268.1 993.0,269.8C1009.3,271.5 1028.9,274.2 1045.6,278.6C1062.3,283.0 1077.5,288.2 1093.0,296.4C1108.5,304.6 1126.6,317.3 1138.5,328.0C1150.4,338.7 1156.5,349.5 1164.2,360.7C1172.0,371.9 1180.4,386.9 1185.0,395.0C1189.6,403.1 1189.5,403.1 1191.8,409.0C1194.1,414.9 1196.8,422.8 1198.8,430.3C1200.8,437.8 1202.8,448.3 1204.1,454.2C1205.4,460.1 1205.5,459.1 1206.8,465.7C1208.1,472.3 1210.2,484.7 1211.7,494.0C1213.2,503.3 1215.3,516.9 1216.0,521.5Z" fill="#a4376e"/>
<path d="M507.0,521.5C507.7,516.9 509.8,503.3 511.3,494.0C512.8,484.7 514.9,472.3 516.2,465.7C517.5,459.1 517.6,460.1 518.9,454.2C520.2,448.3 522.2,437.8 524.2,430.3C526.2,422.8 528.9,414.9 531.2,409.0C533.5,403.1 533.4,403.1 538.0,395.0C542.6,386.9 551.0,371.9 558.8,360.7C566.5,349.5 572.6,338.7 584.5,328.0C596.4,317.3 614.5,304.6 630.0,296.4C645.5,288.2 660.7,283.0 677.4,278.6C694.1,274.2 713.7,271.5 730.0,269.8C746.3,268.1 767.5,268.6 775.0,268.4L948.0,268.4C955.5,268.6 976.7,268.1 993.0,269.8C1009.3,271.5 1028.9,274.2 1045.6,278.6C1062.3,283.0 1077.5,288.2 1093.0,296.4C1108.5,304.6 1126.6,317.3 1138.5,328.0C1150.4,338.7 1156.5,349.5 1164.2,360.7C1172.0,371.9 1180.4,386.9 1185.0,395.0C1189.6,403.1 1189.5,403.1 1191.8,409.0C1194.1,414.9 1196.8,422.8 1198.8,430.3C1200.8,437.8 1202.8,448.3 1204.1,454.2C1205.4,460.1 1205.5,459.1 1206.8,465.7C1208.1,472.3 1210.2,484.7 1211.7,494.0C1213.2,503.3 1215.3,516.9 1216.0,521.5L1198.0,521.5C1197.4,518.1 1195.7,508.8 1194.4,501.0C1193.1,493.2 1191.3,481.7 1190.0,474.5C1188.7,467.3 1188.1,463.6 1186.5,457.7C1184.9,451.8 1182.5,445.9 1180.3,439.0C1178.1,432.1 1175.8,423.0 1173.2,416.0C1170.6,409.0 1167.9,403.4 1164.4,396.8C1160.9,390.2 1159.5,386.1 1152.3,376.5C1145.1,366.9 1133.5,350.2 1121.0,339.0C1108.5,327.8 1092.4,317.2 1077.2,309.3C1062.0,301.4 1044.0,295.1 1030.0,291.5C1016.0,287.9 1006.7,288.4 993.0,287.5C979.3,286.6 955.5,286.5 948.0,286.3L775.0,286.3C767.5,286.5 743.7,286.6 730.0,287.5C716.3,288.4 707.0,287.9 693.0,291.5C679.0,295.1 661.0,301.4 645.8,309.3C630.6,317.2 614.5,327.8 602.0,339.0C589.5,350.2 577.9,366.9 570.7,376.5C563.5,386.1 562.1,390.2 558.6,396.8C555.1,403.4 552.4,409.0 549.8,416.0C547.1,423.0 544.9,432.1 542.7,439.0C540.5,445.9 538.1,451.8 536.5,457.7C534.9,463.6 534.3,467.3 533.0,474.5C531.7,481.7 529.9,493.2 528.6,501.0C527.3,508.8 525.6,518.1 525.0,521.5Z" fill="#ae3c75"/>
<path d="M507.0,521.5C507.7,516.9 509.8,503.3 511.3,494.0C512.8,484.7 514.9,472.3 516.2,465.7C517.5,459.1 517.6,460.1 518.9,454.2C520.2,448.3 522.2,437.8 524.2,430.3C526.2,422.8 528.9,414.9 531.2,409.0C533.5,403.1 533.4,403.1 538.0,395.0C542.6,386.9 551.0,371.9 558.8,360.7C566.5,349.5 572.6,338.7 584.5,328.0C596.4,317.3 614.5,304.6 630.0,296.4C645.5,288.2 660.7,283.0 677.4,278.6C694.1,274.2 713.7,271.5 730.0,269.8C746.3,268.1 767.5,268.6 775.0,268.4L948.0,268.4C955.5,268.6 976.7,268.1 993.0,269.8C1009.3,271.5 1028.9,274.2 1045.6,278.6C1062.3,283.0 1077.5,288.2 1093.0,296.4C1108.5,304.6 1126.6,317.3 1138.5,328.0C1150.4,338.7 1156.5,349.5 1164.2,360.7C1172.0,371.9 1180.4,386.9 1185.0,395.0C1189.6,403.1 1189.5,403.1 1191.8,409.0C1194.1,414.9 1196.8,422.8 1198.8,430.3C1200.8,437.8 1202.8,448.3 1204.1,454.2C1205.4,460.1 1205.5,459.1 1206.8,465.7C1208.1,472.3 1210.2,484.7 1211.7,494.0C1213.2,503.3 1215.3,516.9 1216.0,521.5L1198.0,521.5C1197.4,518.1 1195.7,508.8 1194.4,501.0C1193.1,493.2 1191.3,481.7 1190.0,474.5C1188.7,467.3 1188.1,463.6 1186.5,457.7C1184.9,451.8 1182.5,445.9 1180.3,439.0C1178.1,432.1 1175.8,423.0 1173.2,416.0C1170.6,409.0 1167.9,403.4 1164.4,396.8C1160.9,390.2 1159.5,386.1 1152.3,376.5C1145.1,366.9 1133.5,350.2 1121.0,339.0C1108.5,327.8 1092.4,317.2 1077.2,309.3C1062.0,301.4 1044.0,295.1 1030.0,291.5C1016.0,287.9 1006.7,288.4 993.0,287.5C979.3,286.6 955.5,286.5 948.0,286.3L775.0,286.3C767.5,286.5 743.7,286.6 730.0,287.5C716.3,288.4 707.0,287.9 693.0,291.5C679.0,295.1 661.0,301.4 645.8,309.3C630.6,317.2 614.5,327.8 602.0,339.0C589.5,350.2 577.9,366.9 570.7,376.5C563.5,386.1 562.1,390.2 558.6,396.8C555.1,403.4 552.4,409.0 549.8,416.0C547.1,423.0 544.9,432.1 542.7,439.0C540.5,445.9 538.1,451.8 536.5,457.7C534.9,463.6 534.3,467.3 533.0,474.5C531.7,481.7 529.9,493.2 528.6,501.0C527.3,508.8 525.6,518.1 525.0,521.5Z" fill="url(#band1)" mask="url(#topm)"/>
<clipPath id="b1c"><path d="M507.0,521.5C507.7,516.9 509.8,503.3 511.3,494.0C512.8,484.7 514.9,472.3 516.2,465.7C517.5,459.1 517.6,460.1 518.9,454.2C520.2,448.3 522.2,437.8 524.2,430.3C526.2,422.8 528.9,414.9 531.2,409.0C533.5,403.1 533.4,403.1 538.0,395.0C542.6,386.9 551.0,371.9 558.8,360.7C566.5,349.5 572.6,338.7 584.5,328.0C596.4,317.3 614.5,304.6 630.0,296.4C645.5,288.2 660.7,283.0 677.4,278.6C694.1,274.2 713.7,271.5 730.0,269.8C746.3,268.1 767.5,268.6 775.0,268.4L948.0,268.4C955.5,268.6 976.7,268.1 993.0,269.8C1009.3,271.5 1028.9,274.2 1045.6,278.6C1062.3,283.0 1077.5,288.2 1093.0,296.4C1108.5,304.6 1126.6,317.3 1138.5,328.0C1150.4,338.7 1156.5,349.5 1164.2,360.7C1172.0,371.9 1180.4,386.9 1185.0,395.0C1189.6,403.1 1189.5,403.1 1191.8,409.0C1194.1,414.9 1196.8,422.8 1198.8,430.3C1200.8,437.8 1202.8,448.3 1204.1,454.2C1205.4,460.1 1205.5,459.1 1206.8,465.7C1208.1,472.3 1210.2,484.7 1211.7,494.0C1213.2,503.3 1215.3,516.9 1216.0,521.5L1198.0,521.5C1197.4,518.1 1195.7,508.8 1194.4,501.0C1193.1,493.2 1191.3,481.7 1190.0,474.5C1188.7,467.3 1188.1,463.6 1186.5,457.7C1184.9,451.8 1182.5,445.9 1180.3,439.0C1178.1,432.1 1175.8,423.0 1173.2,416.0C1170.6,409.0 1167.9,403.4 1164.4,396.8C1160.9,390.2 1159.5,386.1 1152.3,376.5C1145.1,366.9 1133.5,350.2 1121.0,339.0C1108.5,327.8 1092.4,317.2 1077.2,309.3C1062.0,301.4 1044.0,295.1 1030.0,291.5C1016.0,287.9 1006.7,288.4 993.0,287.5C979.3,286.6 955.5,286.5 948.0,286.3L775.0,286.3C767.5,286.5 743.7,286.6 730.0,287.5C716.3,288.4 707.0,287.9 693.0,291.5C679.0,295.1 661.0,301.4 645.8,309.3C630.6,317.2 614.5,327.8 602.0,339.0C589.5,350.2 577.9,366.9 570.7,376.5C563.5,386.1 562.1,390.2 558.6,396.8C555.1,403.4 552.4,409.0 549.8,416.0C547.1,423.0 544.9,432.1 542.7,439.0C540.5,445.9 538.1,451.8 536.5,457.7C534.9,463.6 534.3,467.3 533.0,474.5C531.7,481.7 529.9,493.2 528.6,501.0C527.3,508.8 525.6,518.1 525.0,521.5Z"/></clipPath>
<g clip-path="url(#b1c)"><path d="M558.5,379.0C560.4,376.2 566.0,367.6 570.0,362.1C574.1,356.7 578.5,351.4 582.9,346.2C587.3,341.1 591.5,335.6 596.6,331.2C601.7,326.8 607.8,323.5 613.4,319.6C619.1,315.8 624.5,311.5 630.3,308.0C636.1,304.6 642.2,301.6 648.4,298.9C654.6,296.2 661.2,294.0 667.6,291.7C674.0,289.4 680.3,286.7 686.9,285.1C693.5,283.4 700.3,282.9 707.1,281.9C713.8,280.9 723.9,279.5 727.3,279.1" fill="none" stroke="#d85a99" stroke-width="6" opacity="0.6" filter="url(#bl)"/>
<path d="M1187.5,428.2C1186.4,425.0 1183.4,415.1 1180.8,408.9C1178.1,402.6 1174.8,396.6 1171.5,390.7C1168.2,384.7 1164.8,378.8 1161.0,373.1C1157.2,367.5 1152.9,362.2 1148.7,356.8C1144.5,351.5 1140.5,345.9 1135.8,340.9C1131.2,336.0 1126.1,331.5 1120.8,327.3C1115.5,323.1 1109.6,319.6 1103.9,315.8C1098.3,311.9 1093.0,307.5 1087.0,304.2C1081.1,301.0 1074.5,299.0 1068.2,296.5C1061.8,294.0 1055.5,291.4 1049.0,289.3C1042.6,287.2 1036.1,285.1 1029.4,283.8C1022.8,282.4 1015.9,281.8 1009.2,280.9C1002.4,280.1 992.3,278.9 988.9,278.5" fill="none" stroke="#f07ab6" stroke-width="6.5" opacity="0.95" filter="url(#bl)"/></g>
<path d="M508.6,521.5C509.3,516.9 511.4,503.3 512.9,494.0C514.4,484.7 516.5,472.3 517.8,465.7C519.1,459.1 519.2,460.1 520.5,454.2C521.8,448.3 523.8,437.8 525.8,430.3C527.9,422.8 530.5,414.9 532.8,409.0C535.1,403.1 535.0,403.1 539.6,395.0C544.2,386.9 556.9,366.4 560.4,360.7" fill="none" stroke="#8a2c5b" stroke-width="3.2"/>
<path d="M1214.4,521.5C1213.7,516.9 1211.6,503.3 1210.1,494.0C1208.6,484.7 1206.5,472.3 1205.2,465.7C1203.9,459.1 1203.8,460.1 1202.5,454.2C1201.2,448.3 1199.2,437.8 1197.2,430.3C1195.1,422.8 1192.5,414.9 1190.2,409.0C1187.9,403.1 1188.0,403.1 1183.4,395.0C1178.8,386.9 1166.1,366.4 1162.6,360.7" fill="none" stroke="#8a2c5b" stroke-width="3.2"/>
<path d="M595.0,521.5C595.6,516.2 596.9,500.4 598.5,490.0C600.1,479.6 601.5,470.1 604.5,459.0C607.5,447.9 611.8,433.8 616.4,423.6C621.0,413.4 628.6,404.2 632.2,398.0C635.8,391.8 633.7,391.0 637.9,386.4C642.1,381.8 647.8,376.2 657.6,370.6C667.5,365.0 684.9,356.4 697.0,352.8C709.1,349.2 717.0,349.7 730.0,348.8C743.0,347.9 767.5,347.7 775.0,347.5L948.0,347.5C955.5,347.7 980.0,347.9 993.0,348.8C1006.0,349.7 1013.9,349.2 1026.0,352.8C1038.1,356.4 1055.6,365.0 1065.4,370.6C1075.2,376.2 1080.9,381.8 1085.1,386.4C1089.3,391.0 1087.2,391.8 1090.8,398.0C1094.4,404.2 1102.0,413.4 1106.6,423.6C1111.2,433.8 1115.5,447.9 1118.5,459.0C1121.5,470.1 1122.9,479.6 1124.5,490.0C1126.1,500.4 1127.4,516.2 1128.0,521.5L1114.7,521.5C1115.1,517.9 1116.9,507.1 1117.2,500.0C1117.5,492.9 1117.4,484.7 1116.8,479.0C1116.2,473.3 1115.1,470.0 1113.5,466.0C1111.9,462.0 1110.8,460.1 1107.0,455.0C1103.2,449.9 1097.3,441.7 1091.0,435.5C1084.7,429.3 1076.9,422.3 1069.3,417.7C1061.7,413.1 1054.1,410.7 1045.6,407.8C1037.0,404.9 1026.8,402.4 1018.0,400.5C1009.2,398.6 1000.5,397.0 993.0,396.2C985.5,395.4 976.3,395.7 973.0,395.6L750.0,395.6C746.7,395.7 737.5,395.4 730.0,396.2C722.5,397.0 713.8,398.6 705.0,400.5C696.2,402.4 685.9,404.9 677.4,407.8C668.9,410.7 661.3,413.1 653.7,417.7C646.1,422.3 638.3,429.3 632.0,435.5C625.7,441.7 619.8,449.9 616.0,455.0C612.2,460.1 611.1,462.0 609.5,466.0C607.9,470.0 606.8,473.3 606.2,479.0C605.6,484.7 605.4,492.9 605.8,500.0C606.1,507.1 607.9,517.9 608.3,521.5Z" fill="#bb437d"/>
<path d="M595.0,521.5C595.6,516.2 596.9,500.4 598.5,490.0C600.1,479.6 601.5,470.1 604.5,459.0C607.5,447.9 611.8,433.8 616.4,423.6C621.0,413.4 628.6,404.2 632.2,398.0C635.8,391.8 633.7,391.0 637.9,386.4C642.1,381.8 647.8,376.2 657.6,370.6C667.5,365.0 684.9,356.4 697.0,352.8C709.1,349.2 717.0,349.7 730.0,348.8C743.0,347.9 767.5,347.7 775.0,347.5L948.0,347.5C955.5,347.7 980.0,347.9 993.0,348.8C1006.0,349.7 1013.9,349.2 1026.0,352.8C1038.1,356.4 1055.6,365.0 1065.4,370.6C1075.2,376.2 1080.9,381.8 1085.1,386.4C1089.3,391.0 1087.2,391.8 1090.8,398.0C1094.4,404.2 1102.0,413.4 1106.6,423.6C1111.2,433.8 1115.5,447.9 1118.5,459.0C1121.5,470.1 1122.9,479.6 1124.5,490.0C1126.1,500.4 1127.4,516.2 1128.0,521.5L1114.7,521.5C1115.1,517.9 1116.9,507.1 1117.2,500.0C1117.5,492.9 1117.4,484.7 1116.8,479.0C1116.2,473.3 1115.1,470.0 1113.5,466.0C1111.9,462.0 1110.8,460.1 1107.0,455.0C1103.2,449.9 1097.3,441.7 1091.0,435.5C1084.7,429.3 1076.9,422.3 1069.3,417.7C1061.7,413.1 1054.1,410.7 1045.6,407.8C1037.0,404.9 1026.8,402.4 1018.0,400.5C1009.2,398.6 1000.5,397.0 993.0,396.2C985.5,395.4 976.3,395.7 973.0,395.6L750.0,395.6C746.7,395.7 737.5,395.4 730.0,396.2C722.5,397.0 713.8,398.6 705.0,400.5C696.2,402.4 685.9,404.9 677.4,407.8C668.9,410.7 661.3,413.1 653.7,417.7C646.1,422.3 638.3,429.3 632.0,435.5C625.7,441.7 619.8,449.9 616.0,455.0C612.2,460.1 611.1,462.0 609.5,466.0C607.9,470.0 606.8,473.3 606.2,479.0C605.6,484.7 605.4,492.9 605.8,500.0C606.1,507.1 607.9,517.9 608.3,521.5Z" fill="url(#band3)" mask="url(#topm)"/>
<clipPath id="b3c"><path d="M595.0,521.5C595.6,516.2 596.9,500.4 598.5,490.0C600.1,479.6 601.5,470.1 604.5,459.0C607.5,447.9 611.8,433.8 616.4,423.6C621.0,413.4 628.6,404.2 632.2,398.0C635.8,391.8 633.7,391.0 637.9,386.4C642.1,381.8 647.8,376.2 657.6,370.6C667.5,365.0 684.9,356.4 697.0,352.8C709.1,349.2 717.0,349.7 730.0,348.8C743.0,347.9 767.5,347.7 775.0,347.5L948.0,347.5C955.5,347.7 980.0,347.9 993.0,348.8C1006.0,349.7 1013.9,349.2 1026.0,352.8C1038.1,356.4 1055.6,365.0 1065.4,370.6C1075.2,376.2 1080.9,381.8 1085.1,386.4C1089.3,391.0 1087.2,391.8 1090.8,398.0C1094.4,404.2 1102.0,413.4 1106.6,423.6C1111.2,433.8 1115.5,447.9 1118.5,459.0C1121.5,470.1 1122.9,479.6 1124.5,490.0C1126.1,500.4 1127.4,516.2 1128.0,521.5L1114.7,521.5C1115.1,517.9 1116.9,507.1 1117.2,500.0C1117.5,492.9 1117.4,484.7 1116.8,479.0C1116.2,473.3 1115.1,470.0 1113.5,466.0C1111.9,462.0 1110.8,460.1 1107.0,455.0C1103.2,449.9 1097.3,441.7 1091.0,435.5C1084.7,429.3 1076.9,422.3 1069.3,417.7C1061.7,413.1 1054.1,410.7 1045.6,407.8C1037.0,404.9 1026.8,402.4 1018.0,400.5C1009.2,398.6 1000.5,397.0 993.0,396.2C985.5,395.4 976.3,395.7 973.0,395.6L750.0,395.6C746.7,395.7 737.5,395.4 730.0,396.2C722.5,397.0 713.8,398.6 705.0,400.5C696.2,402.4 685.9,404.9 677.4,407.8C668.9,410.7 661.3,413.1 653.7,417.7C646.1,422.3 638.3,429.3 632.0,435.5C625.7,441.7 619.8,449.9 616.0,455.0C612.2,460.1 611.1,462.0 609.5,466.0C607.9,470.0 606.8,473.3 606.2,479.0C605.6,484.7 605.4,492.9 605.8,500.0C606.1,507.1 607.9,517.9 608.3,521.5Z"/></clipPath>
<g clip-path="url(#b3c)"><path d="M618.1,439.1C619.3,437.4 622.8,432.0 625.3,428.6C627.8,425.1 630.4,421.7 633.0,418.4C635.6,415.1 637.9,411.6 640.8,408.6C643.8,405.6 647.2,402.8 650.7,400.4C654.1,397.9 657.8,395.8 661.6,393.9C665.4,392.0 669.4,390.4 673.4,388.8C677.3,387.1 681.3,385.5 685.3,384.1C689.3,382.7 693.4,381.4 697.5,380.3C701.7,379.3 708.0,378.4 710.1,378.0" fill="none" stroke="#e367a6" stroke-width="10" opacity="0.6" filter="url(#bl)"/>
<path d="M1112.4,454.3C1111.5,452.4 1109.0,446.5 1106.9,442.8C1104.9,439.1 1102.5,435.6 1100.2,432.1C1097.8,428.5 1095.3,425.0 1092.8,421.6C1090.2,418.2 1087.6,415.0 1084.8,411.9C1081.9,408.8 1078.9,405.7 1075.7,403.1C1072.4,400.4 1068.9,397.8 1065.2,395.7C1061.5,393.6 1057.5,392.2 1053.5,390.5C1049.6,388.8 1045.7,387.1 1041.7,385.5C1037.7,384.0 1033.7,382.3 1029.6,381.2C1025.5,380.1 1019.2,379.2 1017.1,378.8" fill="none" stroke="#f57fbc" stroke-width="11" opacity="0.9" filter="url(#bl)"/></g>
<path d="M608.3,521.5C607.9,517.9 606.1,507.1 605.8,500.0C605.4,492.9 605.6,484.7 606.2,479.0C606.8,473.3 607.9,470.0 609.5,466.0C611.1,462.0 612.2,460.1 616.0,455.0C619.8,449.9 625.7,441.7 632.0,435.5C638.3,429.3 646.1,422.3 653.7,417.7C661.3,413.1 668.9,410.7 677.4,407.8C685.9,404.9 696.2,402.4 705.0,400.5C713.8,398.6 722.5,397.0 730.0,396.2C737.5,395.4 746.7,395.7 750.0,395.6L973.0,395.6C976.3,395.7 985.5,395.4 993.0,396.2C1000.5,397.0 1009.2,398.6 1018.0,400.5C1026.8,402.4 1037.0,404.9 1045.6,407.8C1054.1,410.7 1061.7,413.1 1069.3,417.7C1076.9,422.3 1084.7,429.3 1091.0,435.5C1097.3,441.7 1103.2,449.9 1107.0,455.0C1110.8,460.1 1111.9,462.0 1113.5,466.0C1115.1,470.0 1116.2,473.3 1116.8,479.0C1117.4,484.7 1117.5,492.9 1117.2,500.0C1116.9,507.1 1115.1,517.9 1114.7,521.5L1077.2,521.5C1076.6,517.9 1074.2,506.1 1073.5,500.0C1072.8,493.9 1072.5,490.3 1073.0,485.0C1073.5,479.7 1075.7,474.0 1076.5,468.0C1077.3,462.0 1078.2,454.3 1078.0,449.0C1077.8,443.7 1077.0,439.9 1075.5,436.0C1074.0,432.1 1073.4,429.2 1069.0,425.6C1064.6,422.1 1057.5,417.8 1049.3,414.7C1041.1,411.6 1029.5,409.1 1019.6,406.8C1009.7,404.6 1001.9,402.3 990.0,401.2C978.1,400.1 955.0,400.4 948.0,400.2L775.0,400.2C768.0,400.4 744.9,400.1 733.0,401.2C721.1,402.3 713.3,404.6 703.4,406.8C693.5,409.1 681.9,411.6 673.7,414.7C665.5,417.8 658.4,422.1 654.0,425.6C649.6,429.2 649.0,432.1 647.5,436.0C646.0,439.9 645.2,443.7 645.0,449.0C644.8,454.3 645.7,462.0 646.5,468.0C647.3,474.0 649.5,479.7 650.0,485.0C650.5,490.3 650.2,493.9 649.5,500.0C648.8,506.1 646.4,517.9 645.8,521.5Z" fill="#97305f"/>
<path d="M608.3,521.5C607.9,517.9 606.1,507.1 605.8,500.0C605.4,492.9 605.6,484.7 606.2,479.0C606.8,473.3 607.9,470.0 609.5,466.0C611.1,462.0 612.2,460.1 616.0,455.0C619.8,449.9 625.7,441.7 632.0,435.5C638.3,429.3 650.1,420.7 653.7,417.7L654.0,425.6C652.9,427.3 649.0,432.1 647.5,436.0C646.0,439.9 645.2,443.7 645.0,449.0C644.8,454.3 645.7,462.0 646.5,468.0C647.3,474.0 649.5,479.7 650.0,485.0C650.5,490.3 650.2,493.9 649.5,500.0C648.8,506.1 646.4,517.9 645.8,521.5Z" fill="url(#wallL)"/>
<path d="M1114.7,521.5C1115.1,517.9 1116.9,507.1 1117.2,500.0C1117.5,492.9 1117.4,484.7 1116.8,479.0C1116.2,473.3 1115.1,470.0 1113.5,466.0C1111.9,462.0 1110.8,460.1 1107.0,455.0C1103.2,449.9 1097.3,441.7 1091.0,435.5C1084.7,429.3 1072.9,420.7 1069.3,417.7L1069.0,425.6C1070.1,427.3 1074.0,432.1 1075.5,436.0C1077.0,439.9 1077.8,443.7 1078.0,449.0C1078.2,454.3 1077.3,462.0 1076.5,468.0C1075.7,474.0 1073.5,479.7 1073.0,485.0C1072.5,490.3 1072.8,493.9 1073.5,500.0C1074.2,506.1 1076.6,517.9 1077.2,521.5Z" fill="url(#wallR)"/>
<path d="M645.8,521.5C646.4,517.9 648.8,506.1 649.5,500.0C650.2,493.9 650.5,490.3 650.0,485.0C649.5,479.7 647.3,474.0 646.5,468.0C645.7,462.0 644.8,454.3 645.0,449.0C645.2,443.7 646.0,439.9 647.5,436.0C649.0,432.1 649.6,429.2 654.0,425.6C658.4,422.1 665.5,417.8 673.7,414.7C681.9,411.6 693.5,409.1 703.4,406.8C713.3,404.6 721.1,402.3 733.0,401.2C744.9,400.1 768.0,400.4 775.0,400.2L948.0,400.2C955.0,400.4 978.1,400.1 990.0,401.2C1001.9,402.3 1009.7,404.6 1019.6,406.8C1029.5,409.1 1041.1,411.6 1049.3,414.7C1057.5,417.8 1064.6,422.1 1069.0,425.6C1073.4,429.2 1074.0,432.1 1075.5,436.0C1077.0,439.9 1077.8,443.7 1078.0,449.0C1078.2,454.3 1077.3,462.0 1076.5,468.0C1075.7,474.0 1073.5,479.7 1073.0,485.0C1072.5,490.3 1072.8,493.9 1073.5,500.0C1074.2,506.1 1076.6,517.9 1077.2,521.5Z" fill="#a4376e"/>
<path d="M507.0,521.5C507.7,516.9 509.8,503.3 511.3,494.0C512.8,484.7 514.9,472.3 516.2,465.7C517.5,459.1 517.6,460.1 518.9,454.2C520.2,448.3 522.2,437.8 524.2,430.3C526.2,422.8 528.9,414.9 531.2,409.0C533.5,403.1 533.4,403.1 538.0,395.0C542.6,386.9 551.0,371.9 558.8,360.7C566.5,349.5 572.6,338.7 584.5,328.0C596.4,317.3 614.5,304.6 630.0,296.4C645.5,288.2 660.7,283.0 677.4,278.6C694.1,274.2 713.7,271.5 730.0,269.8C746.3,268.1 767.5,268.6 775.0,268.4L948.0,268.4C955.5,268.6 976.7,268.1 993.0,269.8C1009.3,271.5 1028.9,274.2 1045.6,278.6C1062.3,283.0 1077.5,288.2 1093.0,296.4C1108.5,304.6 1126.6,317.3 1138.5,328.0C1150.4,338.7 1156.5,349.5 1164.2,360.7C1172.0,371.9 1180.4,386.9 1185.0,395.0C1189.6,403.1 1189.5,403.1 1191.8,409.0C1194.1,414.9 1196.8,422.8 1198.8,430.3C1200.8,437.8 1202.8,448.3 1204.1,454.2C1205.4,460.1 1205.5,459.1 1206.8,465.7C1208.1,472.3 1210.2,484.7 1211.7,494.0C1213.2,503.3 1215.3,516.9 1216.0,521.5" fill="none" stroke="#4f2240" stroke-width="1" opacity="0.85"/>
<path d="M525.0,521.5C525.6,518.1 527.3,508.8 528.6,501.0C529.9,493.2 531.7,481.7 533.0,474.5C534.3,467.3 534.9,463.6 536.5,457.7C538.1,451.8 540.5,445.9 542.7,439.0C544.9,432.1 547.1,423.0 549.8,416.0C552.4,409.0 555.1,403.4 558.6,396.8C562.1,390.2 563.5,386.1 570.7,376.5C577.9,366.9 589.5,350.2 602.0,339.0C614.5,327.8 630.6,317.2 645.8,309.3C661.0,301.4 679.0,295.1 693.0,291.5C707.0,287.9 716.3,288.4 730.0,287.5C743.7,286.6 767.5,286.5 775.0,286.3L948.0,286.3C955.5,286.5 979.3,286.6 993.0,287.5C1006.7,288.4 1016.0,287.9 1030.0,291.5C1044.0,295.1 1062.0,301.4 1077.2,309.3C1092.4,317.2 1108.5,327.8 1121.0,339.0C1133.5,350.2 1145.1,366.9 1152.3,376.5C1159.5,386.1 1160.9,390.2 1164.4,396.8C1167.9,403.4 1170.6,409.0 1173.2,416.0C1175.8,423.0 1178.1,432.1 1180.3,439.0C1182.5,445.9 1184.9,451.8 1186.5,457.7C1188.1,463.6 1188.7,467.3 1190.0,474.5C1191.3,481.7 1193.1,493.2 1194.4,501.0C1195.7,508.8 1197.4,518.1 1198.0,521.5" fill="none" stroke="#4f2240" stroke-width="1" opacity="0.85"/>
<path d="M595.0,521.5C595.6,516.2 596.9,500.4 598.5,490.0C600.1,479.6 601.5,470.1 604.5,459.0C607.5,447.9 611.8,433.8 616.4,423.6C621.0,413.4 628.6,404.2 632.2,398.0C635.8,391.8 633.7,391.0 637.9,386.4C642.1,381.8 647.8,376.2 657.6,370.6C667.5,365.0 684.9,356.4 697.0,352.8C709.1,349.2 717.0,349.7 730.0,348.8C743.0,347.9 767.5,347.7 775.0,347.5L948.0,347.5C955.5,347.7 980.0,347.9 993.0,348.8C1006.0,349.7 1013.9,349.2 1026.0,352.8C1038.1,356.4 1055.6,365.0 1065.4,370.6C1075.2,376.2 1080.9,381.8 1085.1,386.4C1089.3,391.0 1087.2,391.8 1090.8,398.0C1094.4,404.2 1102.0,413.4 1106.6,423.6C1111.2,433.8 1115.5,447.9 1118.5,459.0C1121.5,470.1 1122.9,479.6 1124.5,490.0C1126.1,500.4 1127.4,516.2 1128.0,521.5" fill="none" stroke="#4f2240" stroke-width="1" opacity="0.85"/>
<path d="M645.8,521.5C646.4,517.9 648.8,506.1 649.5,500.0C650.2,493.9 650.5,490.3 650.0,485.0C649.5,479.7 647.3,474.0 646.5,468.0C645.7,462.0 644.8,454.3 645.0,449.0C645.2,443.7 646.0,439.9 647.5,436.0C649.0,432.1 649.6,429.2 654.0,425.6C658.4,422.1 665.5,417.8 673.7,414.7C681.9,411.6 693.5,409.1 703.4,406.8C713.3,404.6 721.1,402.3 733.0,401.2C744.9,400.1 768.0,400.4 775.0,400.2L948.0,400.2C955.0,400.4 978.1,400.1 990.0,401.2C1001.9,402.3 1009.7,404.6 1019.6,406.8C1029.5,409.1 1041.1,411.6 1049.3,414.7C1057.5,417.8 1064.6,422.1 1069.0,425.6C1073.4,429.2 1074.0,432.1 1075.5,436.0C1077.0,439.9 1077.8,443.7 1078.0,449.0C1078.2,454.3 1077.3,462.0 1076.5,468.0C1075.7,474.0 1073.5,479.7 1073.0,485.0C1072.5,490.3 1072.8,493.9 1073.5,500.0C1074.2,506.1 1076.6,517.9 1077.2,521.5" fill="none" stroke="#4f2240" stroke-width="1" opacity="0.85"/>
<path d="M518.9,455L536.5,458.5M1204.1,455L1186.5,458.5" stroke="#4f2240" stroke-width="1" fill="none"/>
<path d="M741.8,269V286M981.2,269V286M735.9,348V392M987.1,348V392" stroke="#4f2240" stroke-width="1" fill="none" opacity="0.8"/>
<path d="M1074,466L1096,459" stroke="#4f2240" stroke-width="1" fill="none" opacity="0.8"/>
<g clip-path="url(#ballc)"><circle cx="607" cy="489" r="40.3" fill="url(#ball)"/></g>
<path d="M487.4,521.5C487.6,518.1 487.9,508.1 488.5,501.4C489.2,494.7 490.1,488.0 491.3,481.3C492.5,474.7 493.9,468.1 495.7,461.6C497.4,455.0 499.4,448.6 501.7,442.2C503.9,435.9 506.5,429.6 509.3,423.5C512.2,417.3 515.3,411.4 518.7,405.5C522.0,399.7 525.6,394.0 529.4,388.4C533.2,382.9 537.3,377.5 541.5,372.3C545.7,367.1 550.1,362.0 554.7,357.2C559.3,352.3 564.1,347.7 569.1,343.2C574.0,338.7 579.2,334.4 584.4,330.4C589.7,326.3 595.2,322.5 600.7,318.9C606.3,315.3 612.0,311.8 617.8,308.6C623.5,305.4 629.4,302.4 635.4,299.7C641.4,296.9 647.5,294.4 653.7,292.0C659.8,289.7 666.1,287.6 672.4,285.7C678.6,283.8 685.0,282.1 691.4,280.7C697.8,279.2 704.3,278.0 710.8,277.1C717.3,276.1 723.8,275.3 730.3,274.8C736.9,274.3 746.7,274.1 750.0,273.9L973.0,273.9C976.3,274.1 986.1,274.3 992.7,274.8C999.2,275.3 1005.7,276.1 1012.2,277.1C1018.7,278.0 1025.2,279.2 1031.6,280.7C1038.0,282.1 1044.4,283.8 1050.6,285.7C1056.9,287.6 1063.2,289.7 1069.3,292.0C1075.5,294.4 1081.6,296.9 1087.6,299.7C1093.6,302.4 1099.5,305.4 1105.2,308.6C1111.0,311.8 1116.7,315.3 1122.3,318.9C1127.8,322.5 1133.3,326.3 1138.6,330.4C1143.8,334.4 1149.0,338.7 1153.9,343.2C1158.9,347.7 1163.7,352.3 1168.3,357.2C1172.9,362.0 1177.3,367.1 1181.5,372.3C1185.7,377.5 1189.8,382.9 1193.6,388.4C1197.4,394.0 1201.0,399.7 1204.3,405.5C1207.7,411.4 1210.8,417.3 1213.7,423.5C1216.5,429.6 1219.1,435.9 1221.3,442.2C1223.6,448.6 1225.6,455.0 1227.3,461.6C1229.1,468.1 1230.5,474.7 1231.7,481.3C1232.9,488.0 1233.8,494.7 1234.5,501.4C1235.1,508.1 1235.4,518.1 1235.6,521.5M499.1,521.5C499.2,518.4 499.3,509.0 499.8,502.6C500.3,496.3 501.0,489.7 502.0,483.3C503.0,477.0 504.2,470.6 505.8,464.3C507.3,458.0 509.0,451.7 511.1,445.5C513.2,439.4 515.5,433.3 518.2,427.4C520.8,421.4 523.8,415.6 527.0,410.0C530.2,404.3 533.6,398.8 537.3,393.5C540.9,388.1 544.8,382.9 548.8,377.8C552.8,372.8 557.1,367.9 561.5,363.2C565.9,358.5 570.5,353.9 575.3,349.6C580.0,345.2 585.0,341.1 590.0,337.1C595.1,333.2 600.4,329.5 605.8,326.0C611.1,322.5 616.6,319.2 622.2,316.1C627.8,313.0 633.5,310.1 639.2,307.4C645.0,304.7 650.9,302.2 656.8,299.9C662.8,297.6 668.8,295.5 674.9,293.7C681.0,291.8 687.1,290.1 693.3,288.7C699.5,287.2 705.7,286.0 712.0,285.0C718.3,284.0 724.6,283.2 730.9,282.7C737.3,282.1 746.8,281.8 750.0,281.7L973.0,281.7C976.2,281.8 985.7,282.1 992.1,282.7C998.4,283.2 1004.7,284.0 1011.0,285.0C1017.3,286.0 1023.5,287.2 1029.7,288.7C1035.9,290.1 1042.0,291.8 1048.1,293.7C1054.2,295.5 1060.2,297.6 1066.2,299.9C1072.1,302.2 1078.0,304.7 1083.8,307.4C1089.5,310.1 1095.2,313.0 1100.8,316.1C1106.4,319.2 1111.9,322.5 1117.2,326.0C1122.6,329.5 1127.9,333.2 1133.0,337.1C1138.0,341.1 1143.0,345.2 1147.7,349.6C1152.5,353.9 1157.1,358.5 1161.5,363.2C1165.9,367.9 1170.2,372.8 1174.2,377.8C1178.2,382.9 1182.1,388.1 1185.7,393.5C1189.4,398.8 1192.8,404.3 1196.0,410.0C1199.2,415.6 1202.2,421.4 1204.8,427.4C1207.5,433.3 1209.8,439.4 1211.9,445.5C1214.0,451.7 1215.7,458.0 1217.2,464.3C1218.8,470.6 1220.0,477.0 1221.0,483.3C1222.0,489.7 1222.7,496.3 1223.2,502.6C1223.7,509.0 1223.8,518.4 1223.9,521.5M513.9,521.5C513.9,518.6 513.9,510.1 514.2,504.2C514.5,498.3 514.9,492.0 515.7,485.9C516.4,479.8 517.4,473.8 518.7,467.7C519.9,461.7 521.4,455.7 523.2,449.8C525.0,443.9 527.1,438.1 529.5,432.4C532.0,426.7 534.8,421.2 537.8,415.8C540.8,410.4 544.0,405.1 547.5,400.0C550.9,394.9 554.5,389.9 558.4,385.1C562.2,380.2 566.2,375.5 570.4,371.0C574.6,366.5 578.9,362.2 583.5,358.0C588.0,353.9 592.7,349.9 597.5,346.1C602.3,342.4 607.4,338.9 612.5,335.5C617.6,332.2 622.9,329.1 628.2,326.1C633.5,323.2 638.9,320.4 644.4,317.8C649.9,315.2 655.5,312.8 661.2,310.6C666.8,308.4 672.6,306.5 678.4,304.6C684.2,302.8 690.0,301.2 695.9,299.7C701.8,298.3 707.7,297.1 713.7,296.1C719.7,295.1 725.7,294.3 731.8,293.7C737.8,293.1 747.0,292.8 750.0,292.6L973.0,292.6C976.0,292.8 985.2,293.1 991.2,293.7C997.3,294.3 1003.3,295.1 1009.3,296.1C1015.3,297.1 1021.2,298.3 1027.1,299.7C1033.0,301.2 1038.8,302.8 1044.6,304.6C1050.4,306.5 1056.2,308.4 1061.8,310.6C1067.5,312.8 1073.1,315.2 1078.6,317.8C1084.1,320.4 1089.5,323.2 1094.8,326.1C1100.1,329.1 1105.4,332.2 1110.5,335.5C1115.6,338.9 1120.7,342.4 1125.5,346.1C1130.3,349.9 1135.0,353.9 1139.5,358.0C1144.1,362.2 1148.4,366.5 1152.6,371.0C1156.8,375.5 1160.8,380.2 1164.6,385.1C1168.5,389.9 1172.1,394.9 1175.5,400.0C1179.0,405.1 1182.2,410.4 1185.2,415.8C1188.2,421.2 1191.0,426.7 1193.5,432.4C1195.9,438.1 1198.0,443.9 1199.8,449.8C1201.6,455.7 1203.1,461.7 1204.3,467.7C1205.6,473.8 1206.6,479.8 1207.3,485.9C1208.1,492.0 1208.5,498.3 1208.8,504.2C1209.1,510.1 1209.1,518.6 1209.1,521.5M528.6,521.5C528.6,518.9 528.3,511.3 528.5,505.8C528.6,500.3 528.9,494.2 529.4,488.5C529.9,482.7 530.7,477.0 531.7,471.3C532.7,465.5 533.9,459.8 535.5,454.2C537.1,448.5 538.9,443.0 541.2,437.6C543.4,432.2 546.1,426.9 548.9,421.8C551.7,416.7 554.8,411.7 558.0,406.8C561.3,401.9 564.7,397.2 568.3,392.6C572.0,388.0 575.8,383.6 579.7,379.3C583.7,375.0 587.8,370.9 592.1,367.0C596.4,363.0 600.8,359.2 605.4,355.7C610.0,352.2 614.8,348.9 619.7,345.8C624.6,342.6 629.6,339.7 634.7,336.9C639.7,334.2 644.8,331.5 650.1,329.1C655.3,326.7 660.6,324.4 665.9,322.4C671.3,320.3 676.7,318.5 682.2,316.7C687.7,315.0 693.2,313.4 698.8,312.0C704.4,310.7 710.0,309.5 715.7,308.5C721.3,307.6 727.0,306.8 732.7,306.2C738.5,305.6 747.1,305.2 750.0,305.1L973.0,305.1C975.9,305.2 984.5,305.6 990.3,306.2C996.0,306.8 1001.7,307.6 1007.3,308.5C1013.0,309.5 1018.6,310.7 1024.2,312.0C1029.8,313.4 1035.3,315.0 1040.8,316.7C1046.3,318.5 1051.7,320.3 1057.1,322.4C1062.4,324.4 1067.7,326.7 1072.9,329.1C1078.2,331.5 1083.3,334.2 1088.3,336.9C1093.4,339.7 1098.4,342.6 1103.3,345.8C1108.2,348.9 1113.0,352.2 1117.6,355.7C1122.2,359.2 1126.6,363.0 1130.9,367.0C1135.2,370.9 1139.3,375.0 1143.3,379.3C1147.2,383.6 1151.0,388.0 1154.7,392.6C1158.3,397.2 1161.7,401.9 1165.0,406.8C1168.2,411.7 1171.3,416.7 1174.1,421.8C1176.9,426.9 1179.6,432.2 1181.8,437.6C1184.1,443.0 1185.9,448.5 1187.5,454.2C1189.1,459.8 1190.3,465.5 1191.3,471.3C1192.3,477.0 1193.1,482.7 1193.6,488.5C1194.1,494.2 1194.4,500.3 1194.5,505.8C1194.7,511.3 1194.4,518.9 1194.4,521.5M540.3,521.5C540.3,519.1 540.0,512.2 540.1,507.0C540.2,501.9 540.3,496.1 540.8,490.6C541.2,485.2 541.9,479.7 542.8,474.2C543.7,468.8 544.7,463.3 546.1,457.9C547.5,452.6 549.3,447.2 551.4,442.1C553.5,437.0 556.1,432.0 558.9,427.1C561.6,422.3 564.6,417.6 567.7,413.0C570.8,408.4 574.1,403.9 577.6,399.6C581.1,395.3 584.8,391.1 588.6,387.1C592.4,383.1 596.4,379.3 600.5,375.6C604.6,371.9 608.8,368.4 613.2,365.1C617.6,361.8 622.3,358.9 627.0,356.0C631.6,353.1 636.4,350.5 641.3,348.0C646.1,345.5 651.0,343.1 655.9,340.9C660.9,338.7 665.9,336.7 671.0,334.8C676.1,333.0 681.2,331.3 686.4,329.8C691.5,328.2 696.7,326.8 702.0,325.5C707.2,324.3 712.5,323.3 717.8,322.4C723.1,321.6 728.5,320.9 733.8,320.4C739.2,319.9 747.3,319.7 750.0,319.5L973.0,319.5C975.7,319.7 983.8,319.9 989.2,320.4C994.5,320.9 999.9,321.6 1005.2,322.4C1010.5,323.3 1015.8,324.3 1021.0,325.5C1026.3,326.8 1031.5,328.2 1036.6,329.8C1041.8,331.3 1046.9,333.0 1052.0,334.8C1057.1,336.7 1062.1,338.7 1067.1,340.9C1072.0,343.1 1076.9,345.5 1081.7,348.0C1086.6,350.5 1091.4,353.1 1096.0,356.0C1100.7,358.9 1105.4,361.8 1109.8,365.1C1114.2,368.4 1118.4,371.9 1122.5,375.6C1126.6,379.3 1130.6,383.1 1134.4,387.1C1138.2,391.1 1141.9,395.3 1145.4,399.6C1148.9,403.9 1152.2,408.4 1155.3,413.0C1158.4,417.6 1161.4,422.3 1164.1,427.1C1166.9,432.0 1169.5,437.0 1171.6,442.1C1173.7,447.2 1175.5,452.6 1176.9,457.9C1178.3,463.3 1179.3,468.8 1180.2,474.2C1181.1,479.7 1181.8,485.2 1182.2,490.6C1182.7,496.1 1182.8,501.9 1182.9,507.0C1183.0,512.2 1182.7,519.1 1182.7,521.5M550.2,521.5C550.2,519.3 549.9,512.9 549.9,508.1C549.9,503.2 549.9,497.7 550.2,492.4C550.6,487.2 551.1,481.9 551.9,476.7C552.6,471.4 553.5,466.1 554.8,461.0C556.1,455.8 557.7,450.7 559.7,445.7C561.7,440.8 564.2,436.1 566.8,431.4C569.4,426.8 572.3,422.3 575.4,417.9C578.4,413.5 581.6,409.2 584.9,405.1C588.3,401.0 591.8,397.1 595.5,393.2C599.1,389.4 603.0,385.7 606.9,382.3C610.9,378.8 615.0,375.4 619.2,372.3C623.5,369.2 628.0,366.5 632.5,363.8C637.0,361.1 641.6,358.7 646.2,356.3C650.9,354.0 655.5,351.7 660.3,349.7C665.0,347.6 669.9,345.8 674.7,344.1C679.6,342.4 684.5,340.8 689.4,339.4C694.3,338.0 699.3,336.6 704.3,335.4C709.3,334.3 714.3,333.3 719.4,332.5C724.4,331.7 729.5,331.1 734.6,330.6C739.7,330.2 747.4,330.0 750.0,329.8L973.0,329.8C975.6,330.0 983.3,330.2 988.4,330.6C993.5,331.1 998.6,331.7 1003.6,332.5C1008.7,333.3 1013.7,334.3 1018.7,335.4C1023.7,336.6 1028.7,338.0 1033.6,339.4C1038.5,340.8 1043.4,342.4 1048.3,344.1C1053.1,345.8 1058.0,347.6 1062.7,349.7C1067.5,351.7 1072.1,354.0 1076.8,356.3C1081.4,358.7 1086.0,361.1 1090.5,363.8C1095.0,366.5 1099.5,369.2 1103.8,372.3C1108.0,375.4 1112.1,378.8 1116.1,382.3C1120.0,385.7 1123.9,389.4 1127.5,393.2C1131.2,397.1 1134.7,401.0 1138.1,405.1C1141.4,409.2 1144.6,413.5 1147.6,417.9C1150.7,422.3 1153.6,426.8 1156.2,431.4C1158.8,436.1 1161.3,440.8 1163.3,445.7C1165.3,450.7 1166.9,455.8 1168.2,461.0C1169.5,466.1 1170.4,471.4 1171.1,476.7C1171.9,481.9 1172.4,487.2 1172.8,492.4C1173.1,497.7 1173.1,503.2 1173.1,508.1C1173.1,512.9 1172.8,519.3 1172.8,521.5M559.0,521.5C558.9,519.4 558.6,513.6 558.5,509.0C558.4,504.5 558.4,499.0 558.6,494.0C558.8,489.0 559.3,483.9 559.9,478.8C560.6,473.8 561.3,468.7 562.5,463.7C563.6,458.7 565.1,453.7 567.0,449.0C569.0,444.3 571.4,439.7 573.9,435.3C576.5,430.8 579.3,426.5 582.2,422.3C585.1,418.1 588.2,414.0 591.5,410.1C594.7,406.2 598.1,402.4 601.7,398.7C605.2,395.1 608.9,391.6 612.7,388.3C616.6,385.0 620.5,381.7 624.6,378.8C628.7,375.9 633.1,373.3 637.5,370.9C641.8,368.4 646.3,366.1 650.8,363.9C655.2,361.7 659.7,359.6 664.3,357.7C668.9,355.8 673.5,354.1 678.2,352.5C682.8,350.9 687.5,349.5 692.2,348.2C696.9,346.8 701.6,345.5 706.4,344.5C711.2,343.4 716.0,342.6 720.8,341.8C725.6,341.1 730.5,340.5 735.4,340.1C740.2,339.7 747.6,339.5 750.0,339.4L973.0,339.4C975.4,339.5 982.8,339.7 987.6,340.1C992.5,340.5 997.4,341.1 1002.2,341.8C1007.0,342.6 1011.8,343.4 1016.6,344.5C1021.4,345.5 1026.1,346.8 1030.8,348.2C1035.5,349.5 1040.2,350.9 1044.8,352.5C1049.5,354.1 1054.1,355.8 1058.7,357.7C1063.3,359.6 1067.8,361.7 1072.2,363.9C1076.7,366.1 1081.2,368.4 1085.5,370.9C1089.9,373.3 1094.3,375.9 1098.4,378.8C1102.5,381.7 1106.4,385.0 1110.3,388.3C1114.1,391.6 1117.8,395.1 1121.3,398.7C1124.9,402.4 1128.3,406.2 1131.5,410.1C1134.8,414.0 1137.9,418.1 1140.8,422.3C1143.7,426.5 1146.5,430.8 1149.1,435.3C1151.6,439.7 1154.0,444.3 1156.0,449.0C1157.9,453.7 1159.4,458.7 1160.5,463.7C1161.7,468.7 1162.4,473.8 1163.1,478.8C1163.7,483.9 1164.2,489.0 1164.4,494.0C1164.6,499.0 1164.6,504.5 1164.5,509.0C1164.4,513.6 1164.1,519.4 1164.0,521.5M567.8,521.5C567.7,519.6 567.3,514.3 567.2,510.0C567.0,505.7 566.9,500.4 567.0,495.6C567.1,490.7 567.4,485.9 567.9,481.0C568.4,476.1 569.0,471.2 570.1,466.4C571.1,461.6 572.5,456.8 574.3,452.2C576.1,447.7 578.5,443.3 580.9,439.0C583.4,434.7 586.1,430.6 588.9,426.6C591.7,422.6 594.7,418.7 597.8,414.9C601.0,411.2 604.3,407.5 607.7,404.0C611.1,400.6 614.7,397.2 618.3,394.1C622.0,390.9 625.8,387.8 629.8,385.1C633.8,382.3 638.0,379.9 642.2,377.6C646.4,375.2 650.8,373.1 655.1,371.1C659.4,369.0 663.7,367.0 668.0,365.3C672.4,363.5 676.9,361.9 681.4,360.4C685.8,359.0 690.3,357.7 694.8,356.4C699.3,355.1 703.8,353.9 708.4,352.9C712.9,351.9 717.5,351.1 722.1,350.4C726.8,349.7 731.4,349.1 736.0,348.7C740.7,348.4 747.7,348.2 750.0,348.1L973.0,348.1C975.3,348.2 982.3,348.4 987.0,348.7C991.6,349.1 996.2,349.7 1000.9,350.4C1005.5,351.1 1010.1,351.9 1014.6,352.9C1019.2,353.9 1023.7,355.1 1028.2,356.4C1032.7,357.7 1037.2,359.0 1041.6,360.4C1046.1,361.9 1050.6,363.5 1055.0,365.3C1059.3,367.0 1063.6,369.0 1067.9,371.1C1072.2,373.1 1076.6,375.2 1080.8,377.6C1085.0,379.9 1089.2,382.3 1093.2,385.1C1097.2,387.8 1101.0,390.9 1104.7,394.1C1108.3,397.2 1111.9,400.6 1115.3,404.0C1118.7,407.5 1122.0,411.2 1125.2,414.9C1128.3,418.7 1131.3,422.6 1134.1,426.6C1136.9,430.6 1139.6,434.7 1142.1,439.0C1144.5,443.3 1146.9,447.7 1148.7,452.2C1150.5,456.8 1151.9,461.6 1152.9,466.4C1154.0,471.2 1154.6,476.1 1155.1,481.0C1155.6,485.9 1155.9,490.7 1156.0,495.6C1156.1,500.4 1156.0,505.7 1155.8,510.0C1155.7,514.3 1155.3,519.6 1155.2,521.5M577.6,521.5C577.5,519.8 577.0,515.1 576.8,511.0C576.6,507.0 576.3,501.9 576.3,497.3C576.3,492.7 576.5,488.1 576.8,483.4C577.2,478.7 577.6,474.0 578.5,469.4C579.4,464.8 580.7,460.1 582.3,455.8C584.0,451.4 586.3,447.2 588.7,443.2C591.0,439.1 593.6,435.2 596.3,431.3C599.0,427.5 601.9,423.8 604.9,420.2C607.9,416.6 611.0,413.2 614.3,409.9C617.6,406.6 621.0,403.4 624.5,400.4C628.0,397.4 631.7,394.5 635.5,391.9C639.3,389.4 643.4,387.1 647.4,385.0C651.5,382.8 655.6,380.9 659.8,379.0C663.9,377.1 668.0,375.2 672.2,373.6C676.4,371.9 680.6,370.5 684.9,369.1C689.1,367.8 693.4,366.6 697.7,365.4C702.0,364.2 706.2,363.0 710.5,362.1C714.9,361.2 719.2,360.4 723.6,359.8C728.0,359.1 732.4,358.6 736.8,358.2C741.2,357.9 747.8,357.8 750.0,357.7L973.0,357.7C975.2,357.8 981.8,357.9 986.2,358.2C990.6,358.6 995.0,359.1 999.4,359.8C1003.8,360.4 1008.1,361.2 1012.5,362.1C1016.8,363.0 1021.0,364.2 1025.3,365.4C1029.6,366.6 1033.9,367.8 1038.1,369.1C1042.4,370.5 1046.6,371.9 1050.8,373.6C1055.0,375.2 1059.1,377.1 1063.2,379.0C1067.4,380.9 1071.5,382.8 1075.6,385.0C1079.6,387.1 1083.7,389.4 1087.5,391.9C1091.3,394.5 1095.0,397.4 1098.5,400.4C1102.0,403.4 1105.4,406.6 1108.7,409.9C1112.0,413.2 1115.1,416.6 1118.1,420.2C1121.1,423.8 1124.0,427.5 1126.7,431.3C1129.4,435.2 1132.0,439.1 1134.3,443.2C1136.7,447.2 1139.0,451.4 1140.7,455.8C1142.3,460.1 1143.6,464.8 1144.5,469.4C1145.4,474.0 1145.8,478.7 1146.2,483.4C1146.5,488.1 1146.7,492.7 1146.7,497.3C1146.7,501.9 1146.4,507.0 1146.2,511.0C1146.0,515.1 1145.5,519.8 1145.4,521.5M586.5,521.5C586.3,519.9 585.8,515.8 585.5,512.0C585.2,508.2 584.8,503.3 584.7,498.9C584.6,494.5 584.7,490.0 584.9,485.6C585.2,481.1 585.4,476.5 586.2,472.1C587.0,467.7 588.1,463.2 589.7,459.0C591.3,454.9 593.5,450.9 595.8,447.0C598.0,443.1 600.5,439.4 603.1,435.7C605.7,432.1 608.5,428.5 611.4,425.1C614.3,421.8 617.3,418.5 620.5,415.4C623.6,412.2 626.9,409.2 630.3,406.4C633.7,403.5 637.2,400.8 640.8,398.4C644.5,396.0 648.5,393.9 652.4,391.9C656.3,389.9 660.3,388.2 664.2,386.4C668.2,384.7 672.1,382.9 676.1,381.4C680.1,379.9 684.2,378.6 688.2,377.4C692.3,376.1 696.3,375.1 700.4,374.0C704.5,372.9 708.5,371.8 712.6,370.9C716.7,370.1 720.9,369.4 725.0,368.8C729.1,368.2 733.3,367.7 737.5,367.4C741.6,367.1 747.9,367.0 750.0,366.9L973.0,366.9C975.1,367.0 981.4,367.1 985.5,367.4C989.7,367.7 993.9,368.2 998.0,368.8C1002.1,369.4 1006.3,370.1 1010.4,370.9C1014.5,371.8 1018.5,372.9 1022.6,374.0C1026.7,375.1 1030.7,376.1 1034.8,377.4C1038.8,378.6 1042.9,379.9 1046.9,381.4C1050.9,382.9 1054.8,384.7 1058.8,386.4C1062.7,388.2 1066.7,389.9 1070.6,391.9C1074.5,393.9 1078.5,396.0 1082.2,398.4C1085.8,400.8 1089.3,403.5 1092.7,406.4C1096.1,409.2 1099.4,412.2 1102.5,415.4C1105.7,418.5 1108.7,421.8 1111.6,425.1C1114.5,428.5 1117.3,432.1 1119.9,435.7C1122.5,439.4 1125.0,443.1 1127.2,447.0C1129.5,450.9 1131.7,454.9 1133.3,459.0C1134.9,463.2 1136.0,467.7 1136.8,472.1C1137.6,476.5 1137.8,481.1 1138.1,485.6C1138.3,490.0 1138.4,494.5 1138.3,498.9C1138.2,503.3 1137.8,508.2 1137.5,512.0C1137.2,515.8 1136.7,519.9 1136.5,521.5M598.2,521.5C598.0,520.1 597.3,516.7 596.9,513.2C596.5,509.8 595.9,505.1 595.6,501.0C595.4,496.8 595.2,492.6 595.3,488.4C595.3,484.1 595.4,479.8 596.0,475.5C596.6,471.3 597.5,467.1 598.9,463.1C600.3,459.1 602.4,455.4 604.5,451.7C606.6,448.0 609.0,444.5 611.5,441.1C613.9,437.6 616.5,434.3 619.2,431.1C621.9,427.9 624.8,424.8 627.8,421.8C630.8,418.9 633.8,416.0 637.0,413.4C640.2,410.7 643.5,408.1 647.0,405.8C650.5,403.6 654.3,401.7 658.0,399.9C661.7,398.0 665.5,396.4 669.2,394.8C673.0,393.2 676.7,391.6 680.5,390.2C684.2,388.8 688.1,387.6 691.9,386.5C695.7,385.3 699.6,384.3 703.4,383.3C707.2,382.3 711.0,381.2 714.8,380.4C718.7,379.6 722.6,378.9 726.5,378.3C730.4,377.8 734.3,377.3 738.2,377.0C742.1,376.6 748.0,376.5 750.0,376.4L973.0,376.4C975.0,376.5 980.9,376.6 984.8,377.0C988.7,377.3 992.6,377.8 996.5,378.3C1000.4,378.9 1004.3,379.6 1008.2,380.4C1012.0,381.2 1015.8,382.3 1019.6,383.3C1023.4,384.3 1027.3,385.3 1031.1,386.5C1034.9,387.6 1038.8,388.8 1042.5,390.2C1046.3,391.6 1050.0,393.2 1053.8,394.8C1057.5,396.4 1061.3,398.0 1065.0,399.9C1068.7,401.7 1072.5,403.6 1076.0,405.8C1079.5,408.1 1082.8,410.7 1086.0,413.4C1089.2,416.0 1092.2,418.9 1095.2,421.8C1098.2,424.8 1101.1,427.9 1103.8,431.1C1106.5,434.3 1109.1,437.6 1111.5,441.1C1114.0,444.5 1116.4,448.0 1118.5,451.7C1120.6,455.4 1122.7,459.1 1124.1,463.1C1125.5,467.1 1126.4,471.3 1127.0,475.5C1127.6,479.8 1127.7,484.1 1127.7,488.4C1127.8,492.6 1127.6,496.8 1127.4,501.0C1127.1,505.1 1126.5,509.8 1126.1,513.2C1125.7,516.7 1125.0,520.1 1124.8,521.5M603.8,521.5C603.6,520.2 603.0,517.1 602.6,513.9C602.2,510.6 601.6,506.0 601.4,502.0C601.1,498.0 600.9,494.0 600.9,489.9C601.0,485.8 600.9,481.6 601.5,477.5C602.1,473.4 602.9,469.3 604.3,465.5C605.7,461.7 607.8,458.1 609.9,454.6C612.0,451.1 614.3,447.7 616.8,444.5C619.2,441.2 621.7,438.0 624.4,435.0C627.1,432.0 629.9,429.0 632.8,426.3C635.7,423.5 638.7,420.8 641.8,418.3C645.0,415.8 648.2,413.4 651.6,411.3C655.0,409.3 658.7,407.6 662.3,405.9C665.9,404.3 669.6,402.9 673.2,401.4C676.8,400.0 680.4,398.6 684.0,397.3C687.6,396.1 691.3,395.1 695.0,394.1C698.6,393.1 702.3,392.3 705.9,391.4C709.6,390.5 713.2,389.6 716.8,388.8C720.5,388.1 724.2,387.6 727.8,387.1C731.5,386.7 735.2,386.3 738.9,386.0C742.6,385.8 748.2,385.8 750.0,385.8L973.0,385.8C974.8,385.8 980.4,385.8 984.1,386.0C987.8,386.3 991.5,386.7 995.2,387.1C998.8,387.6 1002.5,388.1 1006.2,388.8C1009.8,389.6 1013.4,390.5 1017.1,391.4C1020.7,392.3 1024.4,393.1 1028.0,394.1C1031.7,395.1 1035.4,396.1 1039.0,397.3C1042.6,398.6 1046.2,400.0 1049.8,401.4C1053.4,402.9 1057.1,404.3 1060.7,405.9C1064.3,407.6 1068.0,409.3 1071.4,411.3C1074.8,413.4 1078.0,415.8 1081.2,418.3C1084.3,420.8 1087.3,423.5 1090.2,426.3C1093.1,429.0 1095.9,432.0 1098.6,435.0C1101.3,438.0 1103.8,441.2 1106.2,444.5C1108.7,447.7 1111.0,451.1 1113.1,454.6C1115.2,458.1 1117.3,461.7 1118.7,465.5C1120.1,469.3 1120.9,473.4 1121.5,477.5C1122.1,481.6 1122.0,485.8 1122.1,489.9C1122.1,494.0 1121.9,498.0 1121.6,502.0C1121.4,506.0 1120.8,510.6 1120.4,513.9C1120.0,517.1 1119.4,520.2 1119.2,521.5" fill="none" stroke="#00ffff" stroke-width="1.1" opacity="0.92"/>
<path d="M478.5,521.5C478.8,518.0 479.2,507.4 480.0,500.4C480.8,493.5 481.8,486.6 483.2,479.8C484.5,473.0 486.1,466.2 488.0,459.5C489.9,452.8 492.1,446.2 494.6,439.7C497.0,433.2 499.7,426.8 502.7,420.5C505.7,414.3 508.9,408.1 512.4,402.1C515.9,396.2 519.6,390.3 523.5,384.6C527.5,379.0 531.6,373.5 536.0,368.1C540.3,362.8 544.9,357.6 549.7,352.7C554.4,347.7 559.3,342.9 564.4,338.4C569.5,333.8 574.8,329.5 580.2,325.3C585.6,321.2 591.2,317.2 596.9,313.5C602.6,309.8 608.5,306.3 614.4,303.0C620.3,299.8 626.4,296.7 632.5,293.9C638.7,291.1 644.9,288.5 651.3,286.1C657.6,283.7 664.0,281.6 670.4,279.7C676.9,277.8 683.4,276.1 690.0,274.7C696.6,273.2 703.2,272.0 709.8,271.1C716.5,270.1 723.2,269.4 729.9,268.9C736.6,268.4 746.6,268.2 750.0,268.1L973.0,268.1C976.4,268.2 986.4,268.4 993.1,268.9C999.8,269.4 1006.5,270.1 1013.2,271.1C1019.8,272.0 1026.4,273.2 1033.0,274.7C1039.6,276.1 1046.1,277.8 1052.6,279.7C1059.0,281.6 1065.4,283.7 1071.7,286.1C1078.1,288.5 1084.3,291.1 1090.5,293.9C1096.6,296.7 1102.7,299.8 1108.6,303.0C1114.5,306.3 1120.4,309.8 1126.1,313.5C1131.8,317.2 1137.4,321.2 1142.8,325.3C1148.2,329.5 1153.5,333.8 1158.6,338.4C1163.7,342.9 1168.6,347.7 1173.3,352.7C1178.1,357.6 1182.7,362.8 1187.0,368.1C1191.4,373.5 1195.5,379.0 1199.5,384.6C1203.4,390.3 1207.1,396.2 1210.6,402.1C1214.1,408.1 1217.3,414.3 1220.3,420.5C1223.3,426.8 1226.0,433.2 1228.4,439.7C1230.9,446.2 1233.1,452.8 1235.0,459.5C1236.9,466.2 1238.5,473.0 1239.8,479.8C1241.2,486.6 1242.2,493.5 1243.0,500.4C1243.8,507.4 1244.2,518.0 1244.5,521.5" fill="none" stroke="#00ffff" stroke-width="1.3"/>
<path d="M473.4,521.5C473.6,517.9 474.1,507.0 474.9,499.9C475.7,492.8 476.8,485.8 478.2,478.9C479.6,471.9 481.3,465.0 483.2,458.2C485.2,451.4 487.5,444.7 490.0,438.1C492.5,431.5 495.3,424.9 498.3,418.6C501.3,412.2 504.6,405.9 508.1,399.8C511.6,393.7 515.4,387.8 519.4,382.0C523.4,376.2 527.6,370.6 532.0,365.1C536.4,359.7 541.1,354.4 545.9,349.4C550.7,344.3 555.7,339.4 560.9,334.7C566.1,330.1 571.4,325.6 576.9,321.3C582.4,317.1 588.1,313.0 593.9,309.2C599.7,305.4 605.6,301.8 611.6,298.4C617.7,295.0 623.8,291.9 630.1,289.0C636.3,286.0 642.7,283.4 649.2,280.9C655.6,278.5 662.1,276.2 668.7,274.3C675.3,272.3 682.0,270.6 688.7,269.1C695.4,267.6 702.2,266.3 708.9,265.3C715.7,264.3 722.6,263.6 729.4,263.0C736.3,262.5 746.6,262.3 750.0,262.2L973.0,262.2C976.4,262.3 986.7,262.5 993.6,263.0C1000.4,263.6 1007.3,264.3 1014.1,265.3C1020.8,266.3 1027.6,267.6 1034.3,269.1C1041.0,270.6 1047.7,272.3 1054.3,274.3C1060.9,276.2 1067.4,278.5 1073.8,280.9C1080.3,283.4 1086.7,286.0 1092.9,289.0C1099.2,291.9 1105.3,295.0 1111.4,298.4C1117.4,301.8 1123.3,305.4 1129.1,309.2C1134.9,313.0 1140.6,317.1 1146.1,321.3C1151.6,325.6 1156.9,330.1 1162.1,334.7C1167.3,339.4 1172.3,344.3 1177.1,349.4C1181.9,354.4 1186.6,359.7 1191.0,365.1C1195.4,370.6 1199.6,376.2 1203.6,382.0C1207.6,387.8 1211.4,393.7 1214.9,399.8C1218.4,405.9 1221.7,412.2 1224.7,418.6C1227.7,424.9 1230.5,431.5 1233.0,438.1C1235.5,444.7 1237.8,451.4 1239.8,458.2C1241.7,465.0 1243.4,471.9 1244.8,478.9C1246.2,485.8 1247.3,492.8 1248.1,499.9C1248.9,507.0 1249.4,517.9 1249.6,521.5L1247.9,521.5C1247.6,517.9 1247.0,507.1 1246.2,500.1C1245.3,493.1 1244.2,486.1 1242.7,479.3C1241.3,472.4 1239.6,465.5 1237.6,458.8C1235.6,452.1 1233.3,445.4 1230.8,438.9C1228.3,432.3 1225.5,425.9 1222.4,419.6C1219.4,413.3 1216.1,407.1 1212.5,401.1C1209.0,395.1 1205.2,389.2 1201.2,383.5C1197.2,377.8 1193.0,372.3 1188.6,367.0C1184.1,361.6 1179.5,356.5 1174.7,351.5C1169.9,346.5 1164.9,341.8 1159.7,337.2C1154.6,332.6 1149.2,328.3 1143.8,324.1C1138.3,320.0 1132.6,316.1 1126.9,312.4C1121.1,308.7 1115.3,305.2 1109.3,301.9C1103.3,298.7 1097.2,295.6 1091.0,292.8C1084.8,290.0 1078.5,287.5 1072.1,285.1C1065.8,282.8 1059.3,280.7 1052.8,278.8C1046.3,277.0 1039.8,275.3 1033.2,273.9C1026.6,272.5 1019.9,271.4 1013.3,270.5C1006.6,269.6 999.9,268.9 993.2,268.4C986.5,268.0 976.4,267.9 973.0,267.8L750.0,267.8C746.6,267.9 736.5,268.0 729.8,268.4C723.1,268.9 716.4,269.6 709.7,270.5C703.1,271.4 696.4,272.5 689.8,273.9C683.2,275.3 676.7,277.0 670.2,278.8C663.7,280.7 657.2,282.8 650.9,285.1C644.5,287.5 638.2,290.0 632.0,292.8C625.8,295.6 619.7,298.7 613.7,301.9C607.7,305.2 601.9,308.7 596.1,312.4C590.4,316.1 584.7,320.0 579.2,324.1C573.8,328.3 568.4,332.6 563.3,337.2C558.1,341.8 553.1,346.5 548.3,351.5C543.5,356.5 538.9,361.6 534.4,367.0C530.0,372.3 525.8,377.8 521.8,383.5C517.8,389.2 514.0,395.1 510.5,401.1C506.9,407.1 503.6,413.3 500.6,419.6C497.5,425.9 494.7,432.3 492.2,438.9C489.7,445.4 487.4,452.1 485.4,458.8C483.4,465.5 481.7,472.4 480.3,479.3C478.8,486.1 477.7,493.1 476.8,500.1C476.0,507.1 475.4,517.9 475.1,521.5Z" fill="#00ffff"/>
<path d="M605.4,521.5C605.3,520.3 604.7,517.2 604.4,514.1C604.0,510.9 603.5,506.3 603.2,502.4C603.0,498.4 602.8,494.4 602.9,490.4C602.9,486.4 602.9,482.2 603.5,478.2C604.1,474.2 605.0,470.2 606.4,466.4C607.8,462.7 609.9,459.2 612.0,455.8C614.1,452.3 616.5,449.1 618.9,445.9C621.4,442.7 623.9,439.6 626.6,436.7C629.3,433.7 632.1,430.9 635.0,428.2C637.9,425.5 640.9,423.0 644.0,420.6C647.1,418.2 650.3,415.8 653.7,413.9C657.1,411.9 660.7,410.4 664.3,408.8C667.9,407.3 671.5,406.0 675.1,404.7C678.7,403.4 682.2,402.0 685.8,400.9C689.4,399.8 693.0,398.9 696.6,398.0C700.2,397.1 703.7,396.4 707.3,395.6C710.8,394.8 714.3,394.0 717.9,393.4C721.4,392.7 725.0,392.3 728.6,391.9C732.2,391.5 735.7,391.2 739.3,391.0C742.9,390.9 748.2,391.0 750.0,391.0L973.0,391.0C974.8,391.0 980.1,390.9 983.7,391.0C987.3,391.2 990.8,391.5 994.4,391.9C998.0,392.3 1001.6,392.7 1005.1,393.4C1008.7,394.0 1012.2,394.8 1015.7,395.6C1019.3,396.4 1022.8,397.1 1026.4,398.0C1030.0,398.9 1033.6,399.8 1037.2,400.9C1040.8,402.0 1044.3,403.4 1047.9,404.7C1051.5,406.0 1055.1,407.3 1058.7,408.8C1062.3,410.4 1065.9,411.9 1069.3,413.9C1072.7,415.8 1075.9,418.2 1079.0,420.6C1082.1,423.0 1085.1,425.5 1088.0,428.2C1090.9,430.9 1093.7,433.7 1096.4,436.7C1099.1,439.6 1101.6,442.7 1104.1,445.9C1106.5,449.1 1108.9,452.3 1111.0,455.8C1113.1,459.2 1115.2,462.7 1116.6,466.4C1118.0,470.2 1118.9,474.2 1119.5,478.2C1120.1,482.2 1120.1,486.4 1120.1,490.4C1120.2,494.4 1120.0,498.4 1119.8,502.4C1119.5,506.3 1119.0,510.9 1118.6,514.1C1118.3,517.2 1117.7,520.3 1117.6,521.5L1111.6,521.5C1111.8,520.4 1112.2,517.7 1112.6,514.7C1113.0,511.7 1113.5,507.3 1113.8,503.5C1114.1,499.7 1114.2,495.9 1114.2,492.0C1114.2,488.1 1114.3,484.1 1113.7,480.2C1113.2,476.4 1112.4,472.5 1111.0,468.9C1109.6,465.3 1107.5,462.0 1105.4,458.7C1103.4,455.5 1101.0,452.4 1098.6,449.4C1096.2,446.4 1093.7,443.4 1091.1,440.7C1088.5,437.9 1085.7,435.3 1082.9,432.7C1080.0,430.2 1077.1,427.8 1074.1,425.6C1071.1,423.4 1068.0,421.2 1064.7,419.5C1061.4,417.7 1057.8,416.3 1054.4,414.9C1050.9,413.6 1047.3,412.5 1043.9,411.4C1040.4,410.2 1037.1,409.1 1033.6,408.1C1030.2,407.2 1026.7,406.4 1023.3,405.7C1019.9,405.0 1016.5,404.4 1013.1,403.8C1009.8,403.1 1006.5,402.4 1003.1,401.9C999.8,401.4 996.4,401.0 993.0,400.7C989.7,400.5 986.4,400.2 983.0,400.2C979.7,400.1 974.7,400.3 973.0,400.3L750.0,400.3C748.3,400.3 743.3,400.1 740.0,400.2C736.6,400.2 733.3,400.5 730.0,400.7C726.6,401.0 723.2,401.4 719.9,401.9C716.5,402.4 713.2,403.1 709.9,403.8C706.5,404.4 703.1,405.0 699.7,405.7C696.3,406.4 692.8,407.2 689.4,408.1C685.9,409.1 682.6,410.2 679.1,411.4C675.7,412.5 672.1,413.6 668.6,414.9C665.2,416.3 661.6,417.7 658.3,419.5C655.0,421.2 651.9,423.4 648.9,425.6C645.9,427.8 643.0,430.2 640.1,432.7C637.3,435.3 634.5,437.9 631.9,440.7C629.3,443.4 626.8,446.4 624.4,449.4C622.0,452.4 619.6,455.5 617.6,458.7C615.5,462.0 613.4,465.3 612.0,468.9C610.6,472.5 609.8,476.4 609.3,480.2C608.7,484.1 608.8,488.1 608.8,492.0C608.8,495.9 608.9,499.7 609.2,503.5C609.5,507.3 610.0,511.7 610.4,514.7C610.8,517.7 611.2,520.4 611.4,521.5Z" fill="#00ffff"/>
<path d="M614.0,466.0C615.1,464.2 616.8,460.1 620.5,455.0C624.2,449.9 630.5,441.1 636.5,435.5C642.5,429.9 649.0,425.2 656.2,421.2C663.4,417.2 671.4,414.2 679.9,411.3C688.4,408.4 702.9,405.2 707.5,404.0" fill="none" stroke="#00ffff" stroke-width="2.6"/>
<path d="M1109.0,466.0C1107.9,464.2 1106.2,460.1 1102.5,455.0C1098.8,449.9 1092.5,441.1 1086.5,435.5C1080.5,429.9 1074.0,425.2 1066.8,421.2C1059.6,417.2 1051.6,414.2 1043.1,411.3C1034.5,408.4 1020.1,405.2 1015.5,404.0" fill="none" stroke="#00ffff" stroke-width="2.6"/>
<g clip-path="url(#ballc)" opacity="0.55"><circle cx="607" cy="489" r="40.3" fill="url(#ball)"/></g>
<path d="M608.3,521.5C607.9,517.9 606.1,507.1 605.8,500.0C605.4,492.9 605.6,484.7 606.2,479.0C606.8,473.3 607.9,470.0 609.5,466.0C611.1,462.0 614.9,456.8 616.0,455.0" fill="none" stroke="#19f5e6" stroke-width="4" clip-path="url(#ballc)" opacity="0.9"/>
<rect x="584.2" y="181" width="45.4" height="275.6" fill="url(#cyl)" opacity="0.66"/>
<path d="M584.2,456.6H629.6" stroke="#6b5a2a" stroke-width="1" opacity="0.7"/>
<path d="M419.5,181V521M557.5,181V521" stroke="#1414e6" stroke-width="1" stroke-dasharray="2.2,2.2" fill="none"/>
<rect x="381" y="521.5" width="985" height="184" fill="#a4376e"/>
<rect x="381" y="520.6" width="985" height="1.6" fill="#82305a"/>
<path d="M861.4,489V404" stroke="#7d9cf2" stroke-width="2.2"/>
<path d="M861.4,386.5L865,406.5H857.8Z" fill="#7f9df5"/><path d="M861.4,386.5L862.6,395H860.2Z" fill="#1e3cff"/>
<path d="M861,490H778" stroke="#a9cf9a" stroke-width="2"/>
<path d="M756.5,490L778.5,486.4V493.6Z" fill="#b7dba6"/>
<circle cx="861.4" cy="490.6" r="2.8" fill="#e79aa0"/>
<text x="755.5" y="485.2" font-size="12" fill="#5c9a48">YM</text>
<text x="863" y="490" font-size="12" fill="#cf2e3e">XM</text>
<text x="866" y="384" font-size="12" fill="#3a3aff">ZM</text>
<rect x="381" y="637" width="7.8" height="18.5" fill="#c5a8b9"/>
<path d="M390,652V632" stroke="#0b3cff" stroke-width="2.4"/><path d="M390,625.5L392.6,634H387.4Z" fill="#0b3cff"/>
<path d="M381,656.5H387" stroke="#2ea836" stroke-width="2.4"/>
<circle cx="390.2" cy="656.5" r="4.3" fill="#dcdcdc"/><path d="M387.5,653.5L393,659.5M393,653.5L387.5,659.5" stroke="#e02020" stroke-width="1"/>
<text x="386.6" y="625" font-size="11.5" fill="#3a3aff">Z</text>
</g>
</svg>
<div id="orange2" class="a"></div>
<div class="a" style="left:1365px;top:181px;width:1px;height:525px;background:#f2b070"></div>

<!-- ======= status bar ======= -->
<div id="status" class="a"></div>
<div class="t" style="left:3px;top:710px;font-size:12px;font-weight:bold">移动光</div>
<div class="t" style="left:638px;top:710px;font-size:11.5px;font-weight:bold;letter-spacing:.25px">进给 = 250.000, x = -12.13, y = 28.05, z = -4.47</div>
<svg style="left:1295px;top:708px" width="17" height="17" viewBox="0 0 17 17"><path d="M.6,4V.6H4M13,.6h3.4V4M16.4,13v3.4H13M4,16.4H.6V13" fill="none" stroke="#777" stroke-width="1"/><rect x="3.6" y="4" width="9.8" height="9" fill="#5f8fd8" stroke="#3a5a90" stroke-width="1"/><rect x="4.8" y="6.4" width="7.4" height="5.4" fill="#d5e4f7"/></svg>
<div id="task" class="a"></div>
<div class="a" style="left:491px;top:728px;width:48px;height:8px;background:#33383c"></div>
<div class="t" style="left:1274px;top:730px;font-size:12px;color:#fff">下午 14:21</div>

<!-- ======= watermark ======= -->
<svg style="left:1050px;top:625px" width="316" height="104" viewBox="1050 625 316 104">
<g opacity=".72">
<path d="M1122.2,643.9L1107.1,633.3L1064.8,656.7V705.7L1089.7,718.6C1084,712 1083.5,702 1085.9,692.1V669.5L1107.1,657.4L1128.9,669.5C1130.5,660 1128.5,651 1122.2,643.9Z" fill="#3a6ec0"/>
<path d="M1122.2,643.9L1150.1,656.7V705.7L1130.4,715.5C1121,716.5 1112,712 1107.1,704.2L1128.9,692.1V669.5C1130.5,660 1128.5,651 1122.2,643.9Z" fill="#3c9fe0"/>
<path d="M1085.9,692.1L1107.1,704.2C1112,712 1121,716.5 1130.4,715.5L1107.1,729.1L1089.7,718.6C1084,712 1083.5,702 1085.9,692.1Z" fill="#3cb4ec"/>
<path d="M1107.1,661.2L1125.2,671L1107.1,681.6L1089.4,671Z" fill="#3a6ec0"/><path d="M1089.4,671L1107.1,681.6V701.2L1089.4,691.4Z" fill="#3a6ec0"/><path d="M1125.2,671V691.4L1107.1,701.2V681.6Z" fill="#3c9fe0"/>
</g>
<g fill="none" stroke="#f4dcec" opacity=".92"><path d="M1107.1,633.3L1150.1,656.7V705.7M1064.8,705.7V656.7L1107.1,633.3" stroke-width="2"/><path d="M1107.1,659.3L1127.1,670.5V691.1L1107.1,702.3L1087.6,691.1V670.5Z" stroke-width="3.5"/><path d="M1107.1,681.6V701.2M1089.4,671L1107.1,681.6L1125.2,671" stroke-width=".7"/><path d="M1128.9,669.5C1130.5,660 1128.5,651 1122.2,643.9M1085.9,692.1C1083.5,702 1084,712 1089.7,718.6M1107.1,704.2C1112,712 1121,716.5 1130.4,715.5M1066,690C1068,680 1075,672 1085.9,669.5M1085.9,669.5C1080,665 1074,663.5 1068,664M1128.9,692.1C1138,689 1146,681 1149,672" stroke-width=".7"/></g>
<!-- 3D世界网 -->
<g fill="none" stroke-linecap="round" stroke-linejoin="round">
<defs><path id="wmx" d="M1327.5,665L1335.5,684M1335.5,665L1327.5,684M1340.5,665L1348.5,684M1348.5,665L1340.5,684"/></defs><g id="wmt"><path d="M1162,660L1179,658.5L1169.5,670.5C1183,671 1183,690 1170,690.5C1166,690.5 1163,689 1161.5,686.5M1194,659.5V690.5M1190.5,659.5C1206,657 1219,664 1219,675C1219,686 1206,692 1191,690.5M1227,668.5H1261M1233.5,656.5V689.5H1261.5M1245,654.5V681H1256M1256,655V681M1277.5,654.5H1302.5V671H1277.5ZM1290,654.5V671M1277.5,662.5H1302.5M1289,673C1284,680 1278,685 1270.5,688M1291,673C1296,680 1303,685 1310.5,688M1284.5,684C1284,689 1282,694 1279.5,696.5M1296.5,684V696.5M1321,655.5V695.5M1321,655.5H1354V691.5C1354,694.5 1352,695.5 1348,694.5"/></g>
</g>
<g fill="none" stroke-linecap="round" stroke-linejoin="round"><use href="#wmt" stroke="#efd6e6" stroke-width="10.4"/><use href="#wmx" stroke="#efd6e6" stroke-width="7"/>
<use href="#wmt" stroke="#5b8ac6" stroke-width="7.2"/><use href="#wmx" stroke="#5b8ac6" stroke-width="4"/></g>
<text x="1160.5" y="709.5" font-size="12" font-weight="bold" textLength="193" lengthAdjust="spacingAndGlyphs" fill="#6fbdec" stroke="#fff" stroke-opacity=".85" stroke-width="1.8" paint-order="stroke" letter-spacing="2">WWW.3DSJW.COM</text>
</svg>


<!-- ======= dialog ======= -->
<div id="dlg" class="a">
<div id="dlgtitle" class="a"></div>
<svg style="left:7.5px;top:6px" width="15" height="15" viewBox="0 0 15 15"><g fill="#fff"><circle cx="7.5" cy="7.5" r="5.2"/><path id="dg" d="M6,2.6L6.4,.5H8.6L9,2.6Z"/><use href="#dg" transform="rotate(45 7.5 7.5)"/><use href="#dg" transform="rotate(90 7.5 7.5)"/><use href="#dg" transform="rotate(135 7.5 7.5)"/><use href="#dg" transform="rotate(180 7.5 7.5)"/><use href="#dg" transform="rotate(225 7.5 7.5)"/><use href="#dg" transform="rotate(270 7.5 7.5)"/><use href="#dg" transform="rotate(315 7.5 7.5)"/></g><circle cx="7.5" cy="7.5" r="3.1" fill="#539db8"/><circle cx="7.5" cy="7.5" r="1.5" fill="#fff"/></svg>
<div class="t" style="left:32px;top:5.5px;font-size:13px;color:#fff">刀轨可视化</div>
<svg style="left:323px;top:6px" width="14" height="14" viewBox="0 0 14 14"><path d="M1.2,1.2L12.6,12.6M12.6,1.2L1.2,12.6" stroke="#fff" stroke-width="1.7"/></svg>
<div class="a" style="left:322px;top:28px;width:1px;height:656px;background:#fff"></div>
<!-- dialog scrollbar -->
<svg style="left:325.5px;top:33.5px" width="10" height="7" viewBox="0 0 10 7"><path d="M1.2,5.6L5,1.8L8.800,5.6" fill="none" stroke="#4d4d4d" stroke-width="1.7"/></svg>
<div class="a" style="left:323px;top:45px;width:15px;height:619px;background:#a6a6a6"></div>
<svg style="left:325.5px;top:672.5px" width="10" height="7" viewBox="0 0 10 7"><path d="M1.2,1.4L5,5.2L8.800,1.4" fill="none" stroke="#4d4d4d" stroke-width="1.7"/></svg>
<!-- text list box -->
<div class="a" style="left:12px;top:32px;width:306px;height:42px;background:#f0f0f0;border:1px solid #a2a2a2"></div>
<div class="a" style="left:13px;top:33px;width:287px;height:22px;background:#fff"></div>
<div class="t lbl" style="left:14px;top:37px;font-size:12.3px;letter-spacing:.12px">GOTO/-12.125,28.514,-7.219</div>
<div class="a" style="left:14px;top:51px;width:285px;height:4px;background:#8bbfcf"></div>
<svg style="left:303.5px;top:38px" width="9" height="16" viewBox="0 0 9 16"><path d="M1.3,6L4.5,2.6L7.7,6M1.3,9.6L4.5,13L7.7,9.6" fill="none" stroke="#4d4d4d" stroke-width="1.6"/></svg>
<svg style="left:18px;top:59px" width="8" height="9" viewBox="0 0 8 9"><path d="M6.3,1L2,4.5L6.3,8" fill="none" stroke="#4d4d4d" stroke-width="1.7"/></svg>
<div class="a" style="left:31px;top:56px;width:124px;height:15px;background:#cdcdcd"></div>
<svg style="left:287px;top:59px" width="8" height="9" viewBox="0 0 8 9"><path d="M1.7,1L6,4.5L1.7,8" fill="none" stroke="#4d4d4d" stroke-width="1.7"/></svg>
<!-- slider 1 -->
<div class="t lbl" style="left:245px;top:80px;width:21px;text-align:center">459</div>
<div class="a" style="left:17px;top:106px;width:294px;height:4px;background:#acacac"></div>
<div class="a" style="left:252px;top:98px;width:9px;height:19px;background:#549eb9;border:1px solid #4c5a60"></div>
<div class="t lbl" style="left:16px;top:124px">1</div>
<div class="t lbl" style="left:288px;top:124px;width:30px;text-align:right">557</div>
<div class="t lbl" style="left:10px;top:146px;letter-spacing:.42px">进给率 (MMPM) 250.000000</div>
<!-- tabs -->
<div class="a" style="left:65px;top:167px;width:59px;height:29px;background:#f0f0f0;border:1px solid #d9d9d9"></div>
<div class="a" style="left:124px;top:167px;width:60px;height:29px;background:#f0f0f0;border:1px solid #d9d9d9"></div>
<div class="a" style="left:10px;top:195px;width:308px;height:364px;background:#fff;border:1px solid #d0d0d0"></div>
<div class="a" style="left:10px;top:165px;width:56px;height:32px;background:#fff;border:1px solid #d0d0d0;border-bottom:none"></div>
<div class="t lbl" style="left:27px;top:175px">重播</div>
<div class="t lbl" style="left:73px;top:176px">3D 动态</div>
<div class="t lbl" style="left:133px;top:176px">2D 动态</div>
<!-- panel content -->
<div class="t lbl" style="left:17px;top:204px">显示选项</div>
<div class="t lbl" style="left:17px;top:229px">刀具</div>
<div class="dd" style="left:260px;top:223px;width:51px;height:25px"></div>
<div class="t lbl" style="left:265px;top:229px">刀具</div><div class="tri" style="left:296.5px;top:234px;border-left-width:4px;border-right-width:4px;border-top-width:4.5px"></div>
<div class="cb" style="left:17px;top:254px"></div><div class="t lbl dis" style="left:35px;top:254px">2D 除料</div>
<div class="cb" style="left:17px;top:277px"></div><div class="t lbl dis" style="left:35px;top:277px">显示上一个 IPW</div>
<div class="hsep" style="left:17px;top:296px;width:294px"></div>
<div class="t lbl" style="left:17px;top:304px">运动显示</div>
<div class="t lbl" style="left:17px;top:329px">刀轨</div>
<div class="dd" style="left:176px;top:323px;width:135px;height:25px"></div>
<div class="t lbl" style="left:181px;top:329px">全部</div><div class="tri" style="left:296.5px;top:334px;border-left-width:4px;border-right-width:4px;border-top-width:4.5px"></div>
<div class="t lbl" style="left:17px;top:356px">刀具追踪</div>
<div class="dd" style="left:236px;top:350px;width:75px;height:25px"></div>
<div class="t lbl" style="left:241px;top:356px">工具提示</div><div class="tri" style="left:296.5px;top:361px;border-left-width:4px;border-right-width:4px;border-top-width:4.5px"></div>
<div class="t lbl dis" style="left:17px;top:383px">运动数</div>
<div class="a" style="left:229px;top:377px;width:82px;height:23px;background:#fcfcfc;border:1px solid #dedede"></div>
<div class="t" style="left:260px;top:380px;width:46px;text-align:right;font-family:'Liberation Mono',monospace;font-size:17px;color:#8d8d8d;letter-spacing:-1.2px">10</div>
<div class="cb" style="left:17px;top:406px"></div><div class="t lbl dis" style="left:35px;top:407px">在每一层暂停</div>
<div class="cb" style="left:17px;top:429px"></div><div class="t lbl dis" style="left:35px;top:430px">显示刀具接触</div>
<div class="hsep" style="left:17px;top:448px;width:294px"></div>
<div class="a" style="left:17px;top:452px;width:294px;height:29px;background:#fff;border:1px solid #a3a3a3"></div>
<div class="t lbl" style="left:17px;top:461px;width:294px;text-align:center">过切和碰撞设置</div>
<!-- animation speed -->
<div class="t lbl" style="left:10px;top:566px">动画速度</div>
<div class="t lbl" style="left:296px;top:588px;width:21px;text-align:center;letter-spacing:-.2px">10</div>
<div class="a" style="left:17px;top:614px;width:294px;height:4px;background:#acacac"></div>
<div class="a" style="left:302px;top:606px;width:9px;height:19px;background:#549eb9;border:1px solid #4c5a60"></div>
<div class="t lbl" style="left:16px;top:632px">1</div>
<div class="t lbl" style="left:288px;top:632px;width:30px;text-align:right">10</div>
<!-- playback buttons -->
<div class="pbtn" style="left:46px"></div><div class="pbtn" style="left:80px"></div><div class="pbtn" style="left:114px"></div><div class="pbtn" style="left:148px"></div><div class="pbtn" style="left:182px"></div><div class="pbtn" style="left:216px"></div><div class="pbtn" style="left:250px;border-color:#d2d2d2"></div>
<div class="a" style="left:83px;top:653px;width:26px;height:26px;border:1px dotted #222"></div>
<svg style="left:46px;top:650px" width="240" height="32" viewBox="0 0 240 32"><g fill="#7f0000"><path d="M16,8V23L8.5,15.5Z"/><path d="M26,8V23L18.5,15.5Z"/><path d="M58,8V23L50,15.5Z"/><path d="M88,8V23L80,15.5Z"/><path d="M114,8V23L122,15.5Z"/><path d="M146,8V23L154,15.5Z"/><path d="M174,8V23L182,15.5Z"/><path d="M183.5,8V23L191.5,15.5Z"/></g><g fill="#00007f"><rect x="5.8" y="8" width="2.2" height="15"/><rect x="44.5" y="8" width="2.2" height="15"/><rect x="154.8" y="8" width="2.2" height="15"/><rect x="192" y="8" width="2.2" height="15"/></g><rect x="214" y="10" width="12" height="12" fill="#a99597"/></svg>
<!-- ok / cancel -->
<div class="a" style="left:216px;top:692px;width:54px;height:25px;background:#72b0c6"></div>
<div class="t" style="left:216px;top:698px;width:54px;text-align:center;font-size:12px;color:#fff">确定</div>
<div class="a" style="left:275px;top:692px;width:54px;height:25px;background:#e1e1e1;border:1px solid #adadad"></div>
<div class="t" style="left:275px;top:698px;width:54px;text-align:center;font-size:12px">取消</div>

</div>
</body></html>
